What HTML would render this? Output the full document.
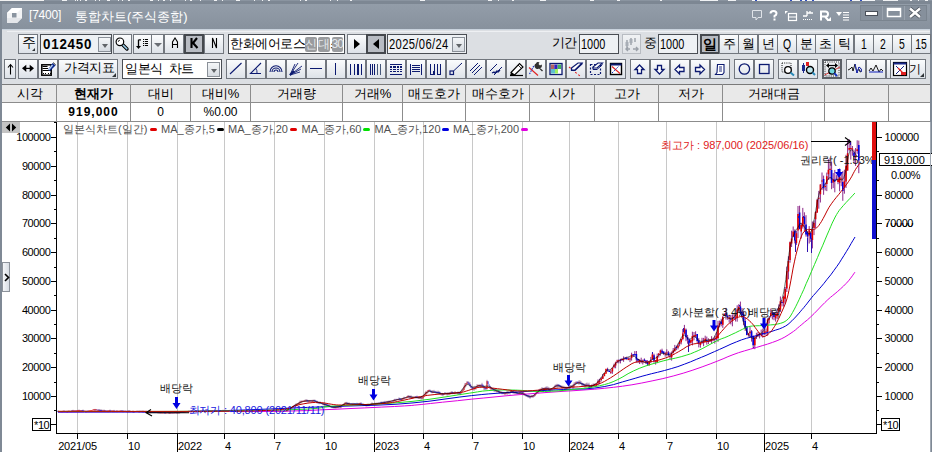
<!DOCTYPE html>
<html><head><meta charset="utf-8"><style>
*{margin:0;padding:0;box-sizing:border-box}
html,body{width:932px;height:452px;overflow:hidden;background:#dcdfe3;font-family:"Liberation Sans",sans-serif;font-size:12px;color:#000}
.a{position:absolute}
.b{position:absolute;border:1px solid #72777e;background:linear-gradient(#fbfcfd,#dde2e8)}
.b.prs{background:#b8bcc3;border:2px solid #44484d}
.b.dis{background:linear-gradient(#f0f2f4,#e0e3e7);border-color:#b8bcc2}
.tx{position:absolute;line-height:16px;white-space:nowrap}
.tx.c{left:0;right:0;text-align:center;top:1px}
.prs .tx.c{top:0}
.ic{position:absolute;left:0;top:0}
.prs .ic{left:-1px;top:-1px}
.tri{position:absolute;right:1px;bottom:1px;width:0;height:0;border-left:4px solid transparent;border-bottom:4px solid #303438}
.ddtri{position:absolute;width:0;height:0;border-left:4px solid transparent;border-right:4px solid transparent;border-top:4px solid #6a6e74}
.inp{position:absolute;top:34px;height:20px;border:1px solid #4a4e54;background:#eef1f4;line-height:18px;padding-left:2px;font-size:13px;white-space:nowrap;overflow:hidden}
.dd{position:absolute;top:2px;width:13px;height:15px;border:1px solid #8a9098;background:linear-gradient(#f4f6f8,#d6dbe1)}
.dd:after{content:"";position:absolute;left:3px;top:6px;border-left:3px solid transparent;border-right:3px solid transparent;border-top:4px solid #606468}
.ttl{color:#fff;font-size:13px;top:9px;white-space:nowrap}
.code{position:absolute;left:2px;top:-1px;font-weight:bold;font-size:15.5px;line-height:19px;letter-spacing:0.9px;transform:scaleX(0.86);transform-origin:0 50%}
.badge{position:absolute;top:37px;height:15px;background:#999b9e;color:#e4e8ec;font-size:12px;line-height:15px;text-align:center;border-radius:2px;overflow:hidden;letter-spacing:-1px}
.tr-r{position:absolute;left:6px;top:4px;border-top:5px solid transparent;border-bottom:5px solid transparent;border-left:6px solid #000}
.tr-l{position:absolute;left:5px;top:3px;border-top:5px solid transparent;border-bottom:5px solid transparent;border-right:6px solid #000}
.cell{position:absolute;text-align:center;font-size:12px;line-height:17px;white-space:nowrap}

.al{font-size:11px;letter-spacing:-0.4px;fill:#000}
.xl{font-size:11px;letter-spacing:-0.15px;fill:#000}
.lg{font-size:11px;fill:#505050}
.an{font-size:11px;fill:#151515}
.lo{font-size:11px;letter-spacing:-0.15px;fill:#2020e0}
.hi{font-size:11px;fill:#e02020}
</style></head><body>
<div class="a" style="left:0px;top:0px;width:932px;height:1px;background:#8a94a0;"></div>
<div class="a" style="left:0px;top:0px;width:44px;height:1px;background:#f2f2f2;"></div>
<div class="a" style="left:0px;top:1px;width:932px;height:3px;background:#7d8793;"></div>
<div class="a" style="left:0px;top:4px;width:932px;height:25px;background:linear-gradient(#939da9,#87919d);"></div>
<div class="a" style="left:2px;top:29px;width:928px;height:56px;background:#dcdfe3;"></div>
<div class="a" style="left:2px;top:29px;width:928px;height:1px;background:#c9d3de;"></div>
<div class="a" style="left:7px;top:31px;width:923px;height:1px;background:#eef0f3;"></div>
<div class="a" style="left:0px;top:4px;width:2px;height:448px;background:#7f8995;"></div>
<div class="a" style="left:930px;top:4px;width:2px;height:448px;background:#7f8995;"></div>
<svg class="a" style="left:0;top:0" width="30" height="30" viewBox="0 0 30 30">
<path d="M12 8H22V18L17 23H7V13Z" fill="#f2f3f5"/>
<path d="M12 8H22L17 13H7Z" fill="#ffffff"/>
<path d="M7 18H17L22 18V18L17 23H7Z" fill="#e4e6ea"/>
<rect x="12" y="13" width="4.5" height="4.5" fill="#8a94a0"/>
</svg>
<div class="a ttl" style="left:29px;font-size:12px;letter-spacing:-0.2px;top:8px">[7400]</div>
<div class="a ttl" style="left:75px;top:8px">통합차트(주식종합)</div>
<div class="a" style="left:62px;top:0px;width:5px;height:1px;background:#f0f2f4;"></div>
<div class="a" style="left:75px;top:0px;width:1px;height:1px;background:#f0f2f4;"></div>
<div class="a" style="left:77px;top:0px;width:1px;height:1px;background:#f0f2f4;"></div>
<div class="a" style="left:80px;top:0px;width:1px;height:1px;background:#f0f2f4;"></div>
<div class="a" style="left:85px;top:0px;width:2px;height:1px;background:#f0f2f4;"></div>
<div class="a" style="left:95px;top:0px;width:1px;height:1px;background:#f0f2f4;"></div>
<div class="a" style="left:99px;top:0px;width:1px;height:1px;background:#f0f2f4;"></div>
<div class="a" style="left:107px;top:0px;width:3px;height:1px;background:#f0f2f4;"></div>
<div class="a" style="left:118px;top:0px;width:1px;height:1px;background:#f0f2f4;"></div>
<div class="a" style="left:122px;top:0px;width:1px;height:1px;background:#f0f2f4;"></div>
<div class="a" style="left:128px;top:0px;width:2px;height:1px;background:#f0f2f4;"></div>
<div class="a" style="left:150px;top:0px;width:3px;height:1px;background:#f0f2f4;"></div>
<div class="a" style="left:158px;top:0px;width:1px;height:1px;background:#f0f2f4;"></div>
<div class="a" style="left:163px;top:0px;width:2px;height:1px;background:#f0f2f4;"></div>
<div class="a" style="left:170px;top:0px;width:1px;height:1px;background:#f0f2f4;"></div>
<div class="a" style="left:185px;top:0px;width:1px;height:1px;background:#f0f2f4;"></div>
<div class="a" style="left:190px;top:0px;width:2px;height:1px;background:#f0f2f4;"></div>
<div class="a" style="left:200px;top:0px;width:1px;height:1px;background:#f0f2f4;"></div>
<div class="a" style="left:214px;top:0px;width:3px;height:1px;background:#f0f2f4;"></div>
<div class="a" style="left:222px;top:0px;width:1px;height:1px;background:#f0f2f4;"></div>
<div class="a" style="left:236px;top:0px;width:4px;height:1px;background:#f0f2f4;"></div>
<div class="a" style="left:254px;top:0px;width:1px;height:1px;background:#f0f2f4;"></div>
<div class="a" style="left:262px;top:0px;width:1px;height:1px;background:#f0f2f4;"></div>
<div class="a" style="left:268px;top:0px;width:2px;height:1px;background:#f0f2f4;"></div>
<div class="a" style="left:300px;top:0px;width:1px;height:1px;background:#f0f2f4;"></div>
<div class="a" style="left:305px;top:0px;width:2px;height:1px;background:#f0f2f4;"></div>
<div class="a" style="left:330px;top:0px;width:1px;height:1px;background:#f0f2f4;"></div>
<div class="a" style="left:337px;top:0px;width:1px;height:1px;background:#f0f2f4;"></div>
<div class="a" style="left:350px;top:0px;width:2px;height:1px;background:#f0f2f4;"></div>
<div class="a" style="left:420px;top:0px;width:5px;height:1px;background:#f0f2f4;"></div>
<div class="a" style="left:488px;top:0px;width:4px;height:1px;background:#f0f2f4;"></div>
<div class="a" style="left:498px;top:0px;width:1px;height:1px;background:#f0f2f4;"></div>
<div class="a" style="left:512px;top:0px;width:2px;height:1px;background:#f0f2f4;"></div>
<div class="a" style="left:540px;top:0px;width:6px;height:1px;background:#f0f2f4;"></div>
<div class="a" style="left:590px;top:0px;width:4px;height:1px;background:#f0f2f4;"></div>
<div class="a" style="left:617px;top:0px;width:3px;height:1px;background:#f0f2f4;"></div>
<div class="a" style="left:660px;top:0px;width:2px;height:1px;background:#f0f2f4;"></div>
<div class="a" style="left:700px;top:0px;width:18px;height:1px;background:#f0f2f4;"></div>
<div class="a" style="left:728px;top:0px;width:8px;height:1px;background:#f0f2f4;"></div>
<div class="a" style="left:883px;top:0px;width:15px;height:1px;background:#f0f2f4;"></div>
<div class="a" style="left:910px;top:0px;width:2px;height:1px;background:#f0f2f4;"></div>
<div class="a" style="left:918px;top:0px;width:1px;height:1px;background:#f0f2f4;"></div>
<div class="a" style="left:925px;top:0px;width:3px;height:1px;background:#f0f2f4;"></div>
<div class="a" style="left:752px;top:0px;width:123px;height:1px;background:#f4f6f8;"></div>
<div class="a" style="left:755px;top:0px;width:2px;height:1px;background:#3050c0;"></div>
<div class="a" style="left:790px;top:0px;width:2px;height:1px;background:#3050c0;"></div>
<div class="a" style="left:800px;top:0px;width:2px;height:1px;background:#3050c0;"></div>
<div class="a" style="left:805px;top:0px;width:2px;height:1px;background:#3050c0;"></div>
<div class="a" style="left:812px;top:0px;width:2px;height:1px;background:#3050c0;"></div>
<div class="a" style="left:850px;top:0px;width:2px;height:1px;background:#3050c0;"></div>
<div class="a" style="left:860px;top:0px;width:2px;height:1px;background:#3050c0;"></div>
<svg class="a" style="left:745px;top:4px" width="187" height="25" viewBox="745 4 187 25">
<path d="M752.5 10.5H761.5V17.5H758L756 20V17.5H752.5Z" fill="none" stroke="#dfe3e8" stroke-width="1"/>
<path d="M770.5 13.5Q770.5 11 773.5 11Q776.5 11 776.5 13.5Q776.5 15 774.5 16V17.5" stroke="#fff" stroke-width="2" fill="none"/><rect x="773.5" y="18.5" width="2" height="2" fill="#fff"/>
<path d="M785 11H788L785 14Z" fill="#fff"/><rect x="788.5" y="13.5" width="8" height="7" fill="none" stroke="#fff" stroke-width="1.2"/><path d="M789 17H796" stroke="#fff"/>
<path d="M803 16H807M807 11V16M807 13H813M810 11V13" stroke="#fff" stroke-width="1.3" fill="none"/><path d="M803 19.5H813" stroke="#fff" stroke-dasharray="1 1"/>
<path d="M821 20.5V11.5H825.5Q828 11.5 828 14Q828 16.5 825.5 16.5H822M825 16.5L828.5 20.5" stroke="#fff" stroke-width="2" fill="none"/><path d="M831 17V21H827Z" fill="#fff"/>
<path d="M836 12H842L839 16Z" fill="#fff"/><path d="M843 12.5H849M843 15H849M843 17.5H849M843 20H849" stroke="#fff" stroke-width="1"/>
<rect x="860.5" y="5.5" width="66" height="15" fill="#86909c" stroke="#7a848f"/>
<path d="M882.5 6V20M904.5 6V20" stroke="#9aa3ae"/>
<rect x="865.5" y="11.5" width="12" height="4" fill="#fff" stroke="#4a505a" stroke-width="1"/>
<rect x="887.5" y="8.5" width="13" height="8" fill="none" stroke="#fff" stroke-width="1.5"/><rect x="887.5" y="8" width="13" height="3" fill="#fff"/>
<path d="M910 8.5L920 17M920 8.5L910 17" stroke="#4a505a" stroke-width="4"/><path d="M910 8.5L920 17M920 8.5L910 17" stroke="#fff" stroke-width="2.4"/>
</svg>
<div class="b " style="left:18px;top:34px;width:20px;height:20px;"><span class="tx" style="left:2.5px;top:0px;font-size:13.5px">주</span><i class="tri" style="border-left-width:3px;border-bottom-width:3px;right:2px;bottom:2px"></i></div>
<div class="inp" style="left:40px;width:72px"><span class="code">012450</span><div class="dd" style="left:57px"></div></div>
<div class="b " style="left:113px;top:34px;width:19px;height:20px;"><svg class="ic" width="17" height="18" viewBox="0 0 17 18"><path d="M8.5 9.5L13 14" stroke="#000" stroke-width="3.4" stroke-linecap="round"/><path d="M9 10L12.8 13.8" stroke="#98cce8" stroke-width="1.6" stroke-linecap="round"/><circle cx="5.9" cy="6.8" r="3.8" fill="#fff" stroke="#000" stroke-width="1.2"/><path d="M4.3 6.8A1.6 1.6 0 0 1 5.9 5.2" stroke="#000" stroke-width="0.9" fill="none"/></svg></div>
<div class="b " style="left:133px;top:34px;width:19px;height:20px;"><svg class="ic" width="17" height="18" viewBox="0 0 17 18"><path d="M4.5 4.8V11.5M4.5 4.8H7" stroke="#000" stroke-width="1.3" fill="none"/><path d="M2 11L7 11L4.5 14Z" fill="#000"/><path d="M9 4.5H10M9 6.5H10M9 8.5H10M9 10.5H10" stroke="#000" stroke-width="1"/><path d="M10.8 4.5H14M10.8 6.5H14M10.8 8.5H14M10.8 10.5H14" stroke="#000" stroke-width="1"/></svg></div>
<div class="b " style="left:151px;top:34px;width:13px;height:20px;"><i class="ddtri" style="left:2px;top:8px"></i></div>
<div class="b " style="left:164px;top:34px;width:20px;height:20px;"></div>
<div class="b prs" style="left:184px;top:34px;width:20px;height:20px;"></div>
<div class="b " style="left:204px;top:34px;width:20px;height:20px;"></div>
<svg class="a" style="left:160px;top:34px" width="64" height="20" viewBox="160 34 64 20"><path d="M172.5 48V42L175 38L177.5 42V48M172.5 44.5H177.5" stroke="#000" stroke-width="1.1" fill="none"/><path d="M191.5 38V48M197 38L193 43L197.5 48" stroke="#000" stroke-width="2.1" fill="none"/><path d="M212.5 48V38L216.5 48V38" stroke="#000" stroke-width="1.1" fill="none"/></svg>
<div class="inp" style="left:228px;width:117px;background:#fff;font-size:13px;padding-left:1px;letter-spacing:-0.5px;line-height:18px">한화에어로스페이스</div>
<div class="badge" style="left:305px;width:11.5px">신</div>
<div class="badge" style="left:318px;width:11.5px">대</div>
<div class="badge" style="left:331.5px;width:11.5px">30</div>
<div class="b " style="left:347px;top:34px;width:20px;height:20px;"><i class="tr-r"></i></div>
<div class="b prs" style="left:366px;top:34px;width:20px;height:20px;"><i class="tr-l"></i></div>
<div class="inp" style="left:387px;width:80px;font-size:14px;padding-left:1px"><span style="display:inline-block;transform:scaleX(0.8);transform-origin:0 50%;letter-spacing:0.45px">2025/06/24</span><div class="dd" style="left:64px"></div></div>
<span class="tx" style="left:552px;top:35px;font-size:13px;letter-spacing:-1px">기간</span>
<div class="inp" style="left:579px;width:40px;font-size:14px;padding-left:1px"><span style="display:inline-block;transform:scaleX(0.78);transform-origin:0 50%">1000</span></div>
<div class="b dis" style="left:622px;top:34px;width:19px;height:20px;"><svg class="ic" width="17" height="18" viewBox="0 0 17 18"><path d="M4 5V13M8 3V10M12 3V7M3 14L7 14M10 14H15M5 12L3 14L5 16M13 12L15 14L13 16" stroke="#9aa0a8" stroke-width="1.4" fill="none"/><rect x="2.5" y="7" width="3" height="4" fill="#a8aeb6"/><rect x="6.5" y="4" width="3" height="4" fill="#a8aeb6"/></svg></div>
<span class="tx" style="left:644px;top:35px;font-size:12.5px">중</span>
<div class="inp" style="left:658px;width:40px;font-size:14px;padding-left:1px"><span style="display:inline-block;transform:scaleX(0.78);transform-origin:0 50%">1000</span></div>
<div class="b prs" style="left:700px;top:34px;width:20px;height:20px;"><span class="tx c" style="font-weight:bold;font-size:14px;">일</span></div>
<div class="b " style="left:719px;top:34px;width:20px;height:20px;"><span class="tx c" style="font-size:13px;">주</span></div>
<div class="b " style="left:738px;top:34px;width:20px;height:20px;"><span class="tx c" style="font-size:13px;">월</span></div>
<div class="b " style="left:758px;top:34px;width:20px;height:20px;"><span class="tx c" style="font-size:13px;">년</span></div>
<div class="b " style="left:777px;top:34px;width:20px;height:20px;"><span class="tx c" style="font-size:14.5px;transform:scaleX(0.72);line-height:17px;">Q</span></div>
<div class="b " style="left:796px;top:34px;width:20px;height:20px;"><span class="tx c" style="font-size:13px;">분</span></div>
<div class="b " style="left:815px;top:34px;width:20px;height:20px;"><span class="tx c" style="font-size:13px;">초</span></div>
<div class="b " style="left:834px;top:34px;width:20px;height:20px;"><span class="tx c" style="font-size:13px;">틱</span></div>
<div class="b " style="left:854px;top:34px;width:20px;height:20px;"><span class="tx c" style="font-size:14.5px;transform:scaleX(0.72);line-height:17px;">1</span></div>
<div class="b " style="left:873px;top:34px;width:20px;height:20px;"><span class="tx c" style="font-size:14.5px;transform:scaleX(0.72);line-height:17px;">2</span></div>
<div class="b " style="left:892px;top:34px;width:20px;height:20px;"><span class="tx c" style="font-size:14.5px;transform:scaleX(0.72);line-height:17px;">5</span></div>
<div class="b " style="left:911px;top:34px;width:20px;height:20px;"><span class="tx c" style="font-size:14.5px;transform:scaleX(0.72);line-height:17px;">15</span></div>
<div class="b " style="left:4px;top:59px;width:12px;height:20px;"><svg class="ic" width="10" height="18" viewBox="0 0 10 18"><path d="M5.5 4.5V14.5M3 7.5L5.5 4.5L8 7.5" stroke="#000" stroke-width="1.1" fill="none"/></svg></div>
<div class="b " style="left:18px;top:59px;width:20px;height:20px;"><svg class="ic" width="18" height="18" viewBox="0 0 18 18"><path d="M3 8.3L7.3 4.7V11.9ZM15 8.3L10.7 4.7V11.9Z" fill="#000"/><rect x="7" y="7.8" width="4" height="1.2" fill="#000"/></svg></div>
<div class="b " style="left:38px;top:59px;width:20px;height:20px;"><svg class="ic" width="18" height="18" viewBox="0 0 18 18"><rect x="2.8" y="4.8" width="9.4" height="10.4" fill="#fff" stroke="#000" stroke-width="1.5"/><path d="M3.5 6.5H8.5M3.5 8.5H9M3.5 10.5H12" stroke="#000" stroke-width="1"/><path d="M4 13.5H5M6 13.5H7M9 13.5H10M11 13.5H12" stroke="#000" stroke-width="1.2"/><path d="M9 9.5L13.5 3L16.5 5.5L11 11Z" fill="#0c2a90"/><path d="M9 9.5L13 4.5L14 5.5L10 10.5Z" fill="#b8d0f0"/><path d="M14 2.5L16.8 5" stroke="#000" stroke-width="0.8"/></svg></div>
<div class="b " style="left:58px;top:59px;width:60px;height:20px;"><span class="tx" style="left:5px;top:0px;font-size:13px;letter-spacing:-0.3px">가격지표</span><i class="tri"></i></div>
<div class="inp" style="left:122px;top:59px;width:100px;background:#fff;font-size:13px;padding-left:2px;letter-spacing:-0.5px;line-height:17px">일본식&nbsp; 차트<div class="dd" style="left:84px"></div></div>
<div class="b " style="left:226px;top:59px;width:20px;height:20px;"><svg class="ic" width="18" height="18" viewBox="0 0 18 18"><path d="M3 14L14.5 3" stroke="#0c1a70" stroke-width="1.1"/></svg></div>
<div class="b " style="left:246px;top:59px;width:20px;height:20px;"><svg class="ic" width="18" height="18" viewBox="0 0 18 18"><path d="M14 3L3.5 13.5H14" stroke="#0c1a70" stroke-width="1.1" fill="none"/><path d="M8.5 8Q10.5 10.5 10 13.5" stroke="#0c1a70" fill="none" stroke-width="0.9"/></svg></div>
<div class="b " style="left:266px;top:59px;width:20px;height:20px;"><svg class="ic" width="18" height="18" viewBox="0 0 18 18"><path d="M3 12A6 6.2 0 0 1 15 12M5 12A4 4 0 0 1 13 12M7 12A2 2 0 0 1 11 12" stroke="#0c1a70" stroke-width="1.1" fill="none"/></svg></div>
<div class="b " style="left:286px;top:59px;width:20px;height:20px;"><svg class="ic" width="18" height="18" viewBox="0 0 18 18"><path d="M3 15L15 6M3 15L14 9M3 15L13 12M3 15L11 3M3 15L8 4" stroke="#0c1a70" stroke-width="0.9"/><path d="M3 15L7 11" stroke="#0c1a70" stroke-width="2"/></svg></div>
<div class="b " style="left:306px;top:59px;width:20px;height:20px;"><svg class="ic" width="18" height="18" viewBox="0 0 18 18"><path d="M3 8.5H15" stroke="#0c1a70" stroke-width="1.2" shape-rendering="crispEdges"/></svg></div>
<div class="b " style="left:326px;top:59px;width:20px;height:20px;"><svg class="ic" width="18" height="18" viewBox="0 0 18 18"><path d="M8.5 3V15" stroke="#0c1a70" stroke-width="1.2" shape-rendering="crispEdges"/></svg></div>
<div class="b " style="left:346px;top:59px;width:20px;height:20px;"><svg class="ic" width="18" height="18" viewBox="0 0 18 18"><path d="M3.5 4V15M7.5 4V15M11 4V15M14.5 4V15" stroke="#0c1a70" stroke-width="1.2" shape-rendering="crispEdges"/></svg></div>
<div class="b " style="left:366px;top:59px;width:20px;height:20px;"><svg class="ic" width="18" height="18" viewBox="0 0 18 18"><path d="M3.5 4V15M5.5 4V15M7.5 4V15" stroke="#0c1a70" stroke-width="1.1" shape-rendering="crispEdges"/><path d="M10.5 4V15M13.5 4V15" stroke="#46587a" stroke-width="1.1" shape-rendering="crispEdges"/></svg></div>
<div class="b " style="left:386px;top:59px;width:20px;height:20px;"><svg class="ic" width="18" height="18" viewBox="0 0 18 18"><g stroke="#0c1a70" stroke-width="1.1" shape-rendering="crispEdges"><path d="M3 4.5H15M3 14.5H15"/><path d="M3 7H4.5M5.5 7H8.5M9.5 7H11.5M12.5 7H15M3 9.5H4.5M5.5 9.5H8.5M9.5 9.5H11.5M12.5 9.5H15M3 11.5H4.5M5.5 11.5H8.5M9.5 11.5H11.5M12.5 11.5H15"/></g></svg></div>
<div class="b " style="left:406px;top:59px;width:20px;height:20px;"><svg class="ic" width="18" height="18" viewBox="0 0 18 18"><g stroke="#0c1a70" stroke-width="1.1" shape-rendering="crispEdges"><path d="M3.5 3.5V14.5M14.5 3.5V14.5M5 5.5H13M5 7.5H13M5 9.5H13M5 11.5H13"/></g></svg></div>
<div class="b " style="left:426px;top:59px;width:20px;height:20px;"><svg class="ic" width="18" height="18" viewBox="0 0 18 18"><path d="M3.5 4V14.5H6.5V11M7.5 14.5V4M10.5 4V14.5H13.5V4" stroke="#0c1a70" stroke-width="1.1" fill="none" shape-rendering="crispEdges"/></svg></div>
<div class="b " style="left:446px;top:59px;width:20px;height:20px;"><svg class="ic" width="18" height="18" viewBox="0 0 18 18"><path d="M6.5 11L15 3" stroke="#0c1a70" stroke-width="1"/><rect x="3" y="11" width="3.5" height="3.5" fill="none" stroke="#0c1a70" stroke-width="1.2"/></svg></div>
<div class="b " style="left:466px;top:59px;width:20px;height:20px;"><svg class="ic" width="18" height="18" viewBox="0 0 18 18"><path d="M3 11L11 3M5 13L13 5M7 15L15 7" stroke="#0c1a70" stroke-width="1"/></svg></div>
<div class="b " style="left:486px;top:59px;width:20px;height:20px;"><svg class="ic" width="18" height="18" viewBox="0 0 18 18"><path d="M3 11L10 4M7 15L15 7" stroke="#0c1a70" stroke-width="1"/><path d="M5 13L7 12L8 13L10 11L11 12L13 10" stroke="#0c1a70" stroke-width="1.3" fill="none"/></svg></div>
<div class="b " style="left:506px;top:59px;width:20px;height:20px;"><svg class="ic" width="18" height="18" viewBox="0 0 18 18"><path d="M4 12.5L12.5 3.5L16 7L7.5 15Z" fill="#fff" stroke="#000" stroke-width="1.1"/><path d="M3 15.5L4 12.5L7.5 15Z" fill="#000"/><path d="M3 15.5H16" stroke="#000" stroke-width="1.2"/><path d="M11 5L14.5 8.5" stroke="#000" stroke-width="0.8"/></svg></div>
<div class="b " style="left:526px;top:59px;width:20px;height:20px;"><svg class="ic" width="18" height="18" viewBox="0 0 18 18"><path d="M2 7.5L11 15.5" stroke="#e02020" stroke-width="1.1"/><path d="M2.5 14L7 5.5" stroke="#1030c0" stroke-width="1.1" stroke-dasharray="1.5 1"/><path d="M9 3.5A2.2 2.2 0 0 1 12.5 2.5L11.5 4L13 5.5L14.5 4.5A2.2 2.2 0 0 1 13 8L16 10.5L15 11.5L12 8.5A2.2 2.2 0 0 1 9 3.5Z" fill="#303030"/></svg></div>
<div class="b " style="left:546px;top:59px;width:20px;height:20px;"><svg class="ic" width="18" height="18" viewBox="0 0 18 18"><rect x="3" y="3.5" width="12" height="11" fill="#fff" stroke="#0c1a70" stroke-width="1.3"/><rect x="4" y="4.5" width="3.3" height="4.5" fill="#b06060"/><rect x="7.3" y="4.5" width="3.3" height="4.5" fill="#3020c0"/><rect x="10.6" y="4.5" width="3.4" height="4.5" fill="#40b060"/><rect x="4" y="9" width="4" height="4.5" fill="#60c0d0"/><rect x="8" y="9" width="3" height="4.5" fill="#a0f060"/></svg></div>
<div class="b " style="left:566px;top:59px;width:20px;height:20px;"><svg class="ic" width="18" height="18" viewBox="0 0 18 18"><path d="M2 7L13 16" stroke="#e02020" stroke-width="1.1" stroke-dasharray="2 2"/><path d="M4.5 8L11 3H15L8 10H4.5Z" fill="#fff" stroke="#0c1a70" stroke-width="1.2"/><path d="M4.5 8V10.5H8L15 4V3" fill="none" stroke="#0c1a70" stroke-width="1.1"/></svg></div>
<div class="b " style="left:586px;top:59px;width:20px;height:20px;"><svg class="ic" width="18" height="18" viewBox="0 0 18 18"><rect x="3.5" y="4.5" width="10" height="10" fill="none" stroke="#0c1a70" stroke-width="1.2" stroke-dasharray="2 1.5"/><path d="M6 7L11 3H15.5L10 8H6Z" fill="#fff" stroke="#0c1a70" stroke-width="1.1"/><path d="M6 7V9.5H10L15.5 4.5" fill="none" stroke="#0c1a70" stroke-width="1"/></svg></div>
<div class="b " style="left:606px;top:59px;width:20px;height:20px;"><svg class="ic" width="18" height="18" viewBox="0 0 18 18"><rect x="3.5" y="3.5" width="11" height="11" fill="#fff" stroke="#000" stroke-width="1.4"/><rect x="3.5" y="3.5" width="11" height="2" fill="#0c1a70"/><path d="M5 6.5L13 13.5" stroke="#e02020" stroke-width="1.1"/><path d="M5 13L12 6" stroke="#1030c0" stroke-width="1" stroke-dasharray="1.5 1"/></svg></div>
<div class="b " style="left:630px;top:59px;width:20px;height:20px;"><svg class="ic" width="18" height="18" viewBox="0 0 18 18"><path d="M8.5 5L4 9.5H6.5V13.5H10.5V9.5H13Z" fill="#fff" stroke="#0c1a70" stroke-width="1.3" stroke-linejoin="miter"/></svg></div>
<div class="b " style="left:650px;top:59px;width:20px;height:20px;"><svg class="ic" width="18" height="18" viewBox="0 0 18 18"><path d="M8.5 14L4 9.5H6.5V5.5H10.5V9.5H13Z" fill="#fff" stroke="#0c1a70" stroke-width="1.3"/></svg></div>
<div class="b " style="left:670px;top:59px;width:20px;height:20px;"><svg class="ic" width="18" height="18" viewBox="0 0 18 18"><path d="M4 9.5L8.5 5V7.5H13V11.5H8.5V14Z" fill="#fff" stroke="#0c1a70" stroke-width="1.3"/></svg></div>
<div class="b " style="left:690px;top:59px;width:20px;height:20px;"><svg class="ic" width="18" height="18" viewBox="0 0 18 18"><path d="M13.5 9.5L9 5V7.5H4.5V11.5H9V14Z" fill="#fff" stroke="#0c1a70" stroke-width="1.3"/></svg></div>
<div class="b " style="left:710px;top:59px;width:20px;height:20px;"><svg class="ic" width="18" height="18" viewBox="0 0 18 18"><path d="M6.5 4.5H13V12.5L11.5 14.5H4.5L6 12.5Z" fill="#fff" stroke="#0c1a70" stroke-width="1.1"/><path d="M8 7H11M8 9H11M8 11H11" stroke="#0c1a70" stroke-width="0.9"/></svg></div>
<div class="b " style="left:734px;top:59px;width:20px;height:20px;"><svg class="ic" width="18" height="18" viewBox="0 0 18 18"><circle cx="9.4" cy="9" r="5.2" fill="none" stroke="#0c1a70" stroke-width="1.3"/></svg></div>
<div class="b " style="left:754px;top:59px;width:20px;height:20px;"><svg class="ic" width="18" height="18" viewBox="0 0 18 18"><rect x="4.5" y="4.5" width="9.5" height="9" fill="none" stroke="#0c1a70" stroke-width="1.3"/></svg></div>
<div class="b " style="left:778px;top:59px;width:20px;height:20px;"><svg class="ic" width="18" height="18" viewBox="0 0 18 18"><rect x="3" y="3" width="9" height="9" fill="none" stroke="#000" stroke-width="0.9" stroke-dasharray="1 1.2"/><circle cx="9" cy="10" r="3.3" fill="#fff" stroke="#000" stroke-width="1.3"/><path d="M11.5 12.5L15 15.5" stroke="#2a8ab8" stroke-width="2"/></svg></div>
<div class="b " style="left:798px;top:59px;width:20px;height:20px;"><svg class="ic" width="18" height="18" viewBox="0 0 18 18"><rect x="3" y="5" width="3" height="6" fill="#1c2a8c"/><path d="M4.5 3V13" stroke="#1c2a8c"/><rect x="7" y="2" width="3" height="4" fill="#e02020"/><circle cx="11" cy="10" r="3.5" fill="#bfe8f0" stroke="#000" stroke-width="1.4"/><path d="M13.5 12.5L16 15" stroke="#2a8ab8" stroke-width="2"/></svg></div>
<div class="b " style="left:822px;top:59px;width:20px;height:20px;border:2px solid #5c6066;background:linear-gradient(#f2f4f7,#dfe3e9)"><svg class="ic" style="left:-1px;top:-1px" width="18" height="18" viewBox="0 0 18 18"><rect x="2" y="2" width="14" height="14" fill="none" stroke="#222" stroke-width="0.9" stroke-dasharray="1 1.2"/><path d="M4.5 5.5H13.5" stroke="#000" stroke-width="1.2"/><path d="M3 5.5L6 3V8ZM15 5.5L12 3V8Z" fill="#000"/><path d="M1.5 15L17 7" stroke="#d02020" stroke-width="0.9"/><circle cx="9" cy="11" r="3.2" fill="#70d8e0" stroke="#000" stroke-width="1.3"/><path d="M11.2 13.2L14 16" stroke="#1030c0" stroke-width="1.8"/></svg></div>
<div class="b " style="left:846px;top:59px;width:20px;height:20px;"><svg class="ic" width="18" height="18" viewBox="0 0 18 18"><path d="M1 10L3 9L5 7L6 11L8 4L10 13L12 7Q16 9 14 12Q12 12 12 9" stroke="#000" stroke-width="0.9" fill="none"/><path d="M8 4L10 13L12 7Q16 9 14 12" stroke="#2030c0" stroke-width="1" fill="none"/></svg></div>
<div class="b " style="left:866px;top:59px;width:20px;height:20px;"><svg class="ic" width="18" height="18" viewBox="0 0 18 18"><path d="M2 11L4 8L6 11L9 5L12 12L14 9L16 11" stroke="#000" stroke-width="0.9" fill="none"/><path d="M2 12H16" stroke="#2030c0" stroke-width="1.1"/></svg></div>
<div class="b " style="left:886px;top:59px;width:5px;height:20px;"></div>
<div class="b " style="left:890px;top:59px;width:20px;height:20px;"><svg class="ic" width="18" height="18" viewBox="0 0 18 18"><rect x="2.5" y="2.5" width="13" height="13" fill="#fff" stroke="#000" stroke-width="1.2"/><rect x="2.5" y="2.5" width="13" height="2" fill="#1c2a8c"/><path d="M5 14L13 6M5 6L13 14" stroke="#1c2a8c"/><path d="M7 8L14 15" stroke="#e02020" stroke-width="1.3"/><rect x="10" y="12" width="5" height="3" fill="#e02020"/></svg></div>
<div class="b " style="left:909px;top:59px;width:17px;height:20px;"><span class="tx" style="left:-1px;top:1px;font-size:12px">기</span><i class="tri"></i></div>
<div class="a" style="left:2px;top:84px;width:928px;height:38px;background:#fff;"></div>
<div class="a" style="left:2px;top:85px;width:928px;height:17px;background:#e9e9e9;"></div>
<div class="a" style="left:2px;top:84px;width:928px;height:1px;background:#7a7a7a;"></div>
<div class="a" style="left:2px;top:102px;width:928px;height:1px;background:#8c8c8c;"></div>
<div class="a" style="left:2px;top:121px;width:928px;height:1px;background:#8c8c8c;"></div>
<div class="a" style="left:56px;top:84px;width:1px;height:38px;background:#8c8c8c;"></div>
<div class="a" style="left:130px;top:84px;width:1px;height:38px;background:#8c8c8c;"></div>
<div class="a" style="left:190px;top:84px;width:1px;height:38px;background:#8c8c8c;"></div>
<div class="a" style="left:250px;top:84px;width:1px;height:38px;background:#8c8c8c;"></div>
<div class="a" style="left:342px;top:84px;width:1px;height:38px;background:#8c8c8c;"></div>
<div class="a" style="left:402px;top:84px;width:1px;height:38px;background:#8c8c8c;"></div>
<div class="a" style="left:465px;top:84px;width:1px;height:38px;background:#8c8c8c;"></div>
<div class="a" style="left:529px;top:84px;width:1px;height:38px;background:#8c8c8c;"></div>
<div class="a" style="left:594px;top:84px;width:1px;height:38px;background:#8c8c8c;"></div>
<div class="a" style="left:658px;top:84px;width:1px;height:38px;background:#8c8c8c;"></div>
<div class="a" style="left:722px;top:84px;width:1px;height:38px;background:#8c8c8c;"></div>
<div class="a" style="left:824px;top:84px;width:1px;height:38px;background:#8c8c8c;"></div>
<div class="a" style="left:888px;top:84px;width:1px;height:38px;background:#8c8c8c;"></div>
<div class="cell" style="left:3px;top:85px;width:53px;font-size:13px;">시각</div>
<div class="cell" style="left:3px;top:103.5px;width:53px;"></div>
<div class="cell" style="left:57px;top:85px;width:73px;font-size:13px;font-weight:bold;">현재가</div>
<div class="cell" style="left:57px;top:103.5px;width:73px;font-weight:bold;"><span style="letter-spacing:1px">919,000</span></div>
<div class="cell" style="left:131px;top:85px;width:59px;font-size:13px;">대비</div>
<div class="cell" style="left:131px;top:103.5px;width:59px;">0</div>
<div class="cell" style="left:191px;top:85px;width:59px;font-size:13px;">대비%</div>
<div class="cell" style="left:191px;top:103.5px;width:59px;">%0.00</div>
<div class="cell" style="left:251px;top:85px;width:91px;font-size:13px;">거래량</div>
<div class="cell" style="left:251px;top:103.5px;width:91px;"></div>
<div class="cell" style="left:343px;top:85px;width:59px;font-size:13px;">거래%</div>
<div class="cell" style="left:343px;top:103.5px;width:59px;"></div>
<div class="cell" style="left:403px;top:85px;width:62px;font-size:13px;">매도호가</div>
<div class="cell" style="left:403px;top:103.5px;width:62px;"></div>
<div class="cell" style="left:466px;top:85px;width:63px;font-size:13px;">매수호가</div>
<div class="cell" style="left:466px;top:103.5px;width:63px;"></div>
<div class="cell" style="left:530px;top:85px;width:64px;font-size:13px;">시가</div>
<div class="cell" style="left:530px;top:103.5px;width:64px;"></div>
<div class="cell" style="left:595px;top:85px;width:63px;font-size:13px;">고가</div>
<div class="cell" style="left:595px;top:103.5px;width:63px;"></div>
<div class="cell" style="left:659px;top:85px;width:63px;font-size:13px;">저가</div>
<div class="cell" style="left:659px;top:103.5px;width:63px;"></div>
<div class="cell" style="left:723px;top:85px;width:101px;font-size:13px;">거래대금</div>
<div class="cell" style="left:723px;top:103.5px;width:101px;"></div>
<div class="cell" style="left:825px;top:85px;width:63px;font-size:13px;"></div>
<div class="cell" style="left:825px;top:103.5px;width:63px;"></div>
<div class="cell" style="left:889px;top:85px;width:41px;font-size:13px;"></div>
<div class="cell" style="left:889px;top:103.5px;width:41px;"></div>
<svg class="a" style="left:0;top:0" width="932" height="452" viewBox="0 0 932 452"><rect x="2" y="122" width="928" height="330" fill="#fff"/><rect x="77" y="122" width="1" height="311" fill="#c8c8c8"/><rect x="127" y="122" width="1" height="311" fill="#c8c8c8"/><rect x="177" y="122" width="1" height="311" fill="#c8c8c8"/><rect x="224" y="122" width="1" height="311" fill="#c8c8c8"/><rect x="274" y="122" width="1" height="311" fill="#c8c8c8"/><rect x="324" y="122" width="1" height="311" fill="#c8c8c8"/><rect x="374" y="122" width="1" height="311" fill="#c8c8c8"/><rect x="423" y="122" width="1" height="311" fill="#c8c8c8"/><rect x="472" y="122" width="1" height="311" fill="#c8c8c8"/><rect x="522" y="122" width="1" height="311" fill="#c8c8c8"/><rect x="569" y="122" width="1" height="311" fill="#c8c8c8"/><rect x="618" y="122" width="1" height="311" fill="#c8c8c8"/><rect x="666" y="122" width="1" height="311" fill="#c8c8c8"/><rect x="716" y="122" width="1" height="311" fill="#c8c8c8"/><rect x="764" y="122" width="1" height="311" fill="#c8c8c8"/><rect x="811" y="122" width="1" height="311" fill="#c8c8c8"/><rect x="2" y="122" width="18" height="11" fill="#c4c4c4"/><path d="M5.8 127.5L10 123.6V131.4Z M16.2 127.5L12 123.6V131.4Z" fill="#000"/><rect x="56" y="122" width="1" height="312" fill="#000"/><rect x="56" y="433" width="821" height="1" fill="#000"/><rect x="876" y="122" width="1" height="312" fill="#000"/><rect x="54" y="122" width="2" height="1" fill="#000"/><rect x="51" y="396" width="5" height="1" fill="#000"/><rect x="877" y="396" width="5" height="1" fill="#000"/><text x="50.5" y="400" text-anchor="end" class="al">10000</text><text x="884.5" y="400" class="al">10000</text><rect x="51" y="367" width="5" height="1" fill="#000"/><rect x="877" y="367" width="5" height="1" fill="#000"/><text x="50.5" y="371" text-anchor="end" class="al">20000</text><text x="884.5" y="371" class="al">20000</text><rect x="51" y="338" width="5" height="1" fill="#000"/><rect x="877" y="338" width="5" height="1" fill="#000"/><text x="50.5" y="342" text-anchor="end" class="al">30000</text><text x="884.5" y="342" class="al">30000</text><rect x="51" y="310" width="5" height="1" fill="#000"/><rect x="877" y="310" width="5" height="1" fill="#000"/><text x="50.5" y="314" text-anchor="end" class="al">40000</text><text x="884.5" y="314" class="al">40000</text><rect x="51" y="281" width="5" height="1" fill="#000"/><rect x="877" y="281" width="5" height="1" fill="#000"/><text x="50.5" y="285" text-anchor="end" class="al">50000</text><text x="884.5" y="285" class="al">50000</text><rect x="51" y="252" width="5" height="1" fill="#000"/><rect x="877" y="252" width="5" height="1" fill="#000"/><text x="50.5" y="256" text-anchor="end" class="al">60000</text><text x="884.5" y="256" class="al">60000</text><rect x="51" y="223" width="5" height="1" fill="#000"/><rect x="877" y="223" width="5" height="1" fill="#000"/><text x="50.5" y="227" text-anchor="end" class="al">70000</text><text x="884.5" y="227" class="al">70000</text><rect x="51" y="195" width="5" height="1" fill="#000"/><rect x="877" y="195" width="5" height="1" fill="#000"/><text x="50.5" y="199" text-anchor="end" class="al">80000</text><text x="884.5" y="199" class="al">80000</text><rect x="51" y="166" width="5" height="1" fill="#000"/><rect x="877" y="166" width="5" height="1" fill="#000"/><text x="50.5" y="170" text-anchor="end" class="al">90000</text><rect x="51" y="137" width="5" height="1" fill="#000"/><rect x="877" y="137" width="5" height="1" fill="#000"/><text x="50.5" y="141" text-anchor="end" class="al">100000</text><text x="884.5" y="141" class="al">100000</text><rect x="54" y="410" width="2" height="1" fill="#000"/><rect x="877" y="410" width="2" height="1" fill="#000"/><rect x="54" y="382" width="2" height="1" fill="#000"/><rect x="877" y="382" width="2" height="1" fill="#000"/><rect x="54" y="353" width="2" height="1" fill="#000"/><rect x="877" y="353" width="2" height="1" fill="#000"/><rect x="54" y="324" width="2" height="1" fill="#000"/><rect x="877" y="324" width="2" height="1" fill="#000"/><rect x="54" y="295" width="2" height="1" fill="#000"/><rect x="877" y="295" width="2" height="1" fill="#000"/><rect x="54" y="267" width="2" height="1" fill="#000"/><rect x="877" y="267" width="2" height="1" fill="#000"/><rect x="54" y="238" width="2" height="1" fill="#000"/><rect x="877" y="238" width="2" height="1" fill="#000"/><rect x="54" y="209" width="2" height="1" fill="#000"/><rect x="877" y="209" width="2" height="1" fill="#000"/><rect x="54" y="180" width="2" height="1" fill="#000"/><rect x="877" y="180" width="2" height="1" fill="#000"/><rect x="54" y="151" width="2" height="1" fill="#000"/><rect x="877" y="151" width="2" height="1" fill="#000"/><rect x="50" y="424" width="6" height="1" fill="#000"/><rect x="877" y="424" width="5" height="1" fill="#000"/><rect x="32.5" y="418.5" width="18" height="12" fill="#fff" stroke="#000"/><text x="34" y="428.5" class="al">*10</text><rect x="881.5" y="418.5" width="18" height="12" fill="#fff" stroke="#000"/><text x="883" y="428.5" class="al">*10</text><rect x="77" y="434" width="1" height="5" fill="#000"/><text x="77.5" y="450" text-anchor="middle" class="xl">2021/05</text><rect x="127" y="434" width="1" height="5" fill="#000"/><text x="128" y="450" class="xl">10</text><rect x="177" y="434" width="1" height="18" fill="#000"/><text x="178" y="450" class="xl">2022</text><rect x="224" y="434" width="1" height="5" fill="#000"/><text x="225" y="450" class="xl">4</text><rect x="274" y="434" width="1" height="5" fill="#000"/><text x="275" y="450" class="xl">7</text><rect x="324" y="434" width="1" height="5" fill="#000"/><text x="325" y="450" class="xl">10</text><rect x="374" y="434" width="1" height="18" fill="#000"/><text x="375" y="450" class="xl">2023</text><rect x="423" y="434" width="1" height="5" fill="#000"/><text x="424" y="450" class="xl">4</text><rect x="472" y="434" width="1" height="5" fill="#000"/><text x="473" y="450" class="xl">7</text><rect x="522" y="434" width="1" height="5" fill="#000"/><text x="523" y="450" class="xl">10</text><rect x="569" y="434" width="1" height="18" fill="#000"/><text x="570" y="450" class="xl">2024</text><rect x="618" y="434" width="1" height="5" fill="#000"/><text x="619" y="450" class="xl">4</text><rect x="666" y="434" width="1" height="5" fill="#000"/><text x="667" y="450" class="xl">7</text><rect x="716" y="434" width="1" height="5" fill="#000"/><text x="717" y="450" class="xl">10</text><rect x="764" y="434" width="1" height="18" fill="#000"/><text x="765" y="450" class="xl">2025</text><rect x="811" y="434" width="1" height="5" fill="#000"/><text x="812" y="450" class="xl">4</text><text x="63" y="133" class="lg">일본식차트(일간)</text><text x="161" y="133" class="lg">MA_종가,5</text><text x="228" y="133" class="lg">MA_종가,20</text><text x="301.5" y="133" class="lg">MA_종가,60</text><text x="374.5" y="133" class="lg">MA_종가,120</text><text x="453" y="133" class="lg">MA_종가,200</text><rect x="150" y="128" width="7" height="3" rx="1.5" fill="#e00000"/><rect x="217" y="128" width="7" height="3" rx="1.5" fill="#000"/><rect x="290" y="128" width="7" height="3" rx="1.5" fill="#e00000"/><rect x="363" y="128" width="7" height="3" rx="1.5" fill="#00e000"/><rect x="442" y="128" width="7" height="3" rx="1.5" fill="#0000e0"/><rect x="521" y="128" width="7" height="3" rx="1.5" fill="#e000e0"/><path d="M590.0 385.4V387.6M591.6 384.6V387.7M593.2 383.6V386.8M594.8 383.6V386.6M596.4 383.2V386.1M598.0 379.4V385.4M599.6 378.7V384.2M601.2 377.2V381.4M602.8 374.0V379.0M607.6 367.7V371.7M610.8 369.5V373.8M612.4 367.8V373.8M614.0 363.7V368.3M615.6 361.7V368.3M617.2 359.7V363.2M618.8 359.5V363.3M620.4 358.8V363.4M622.0 358.0V361.0M623.6 356.4V361.8M625.2 357.0V359.6M626.8 356.6V360.1M628.4 357.4V360.2M630.0 357.2V362.1M631.6 352.7V360.6M633.2 354.2V357.0M634.8 351.1V355.7M636.4 351.0V362.5M638.0 358.6V363.1M639.6 359.4V364.0M641.2 357.7V363.3M642.8 359.6V364.5M644.4 358.4V361.1M646.0 360.2V364.0M647.6 360.2V365.9M649.2 361.2V365.5M650.8 356.9V363.1M652.4 352.6V360.0M654.0 353.7V362.7M655.6 360.0V364.6M657.2 353.6V363.2M658.8 353.0V357.6M660.4 349.6V355.7M662.0 348.7V353.5M663.6 351.5V354.8M665.2 351.8V356.7M666.8 349.3V355.6M668.4 350.9V356.1M670.0 352.4V359.5M671.6 351.5V360.6M673.2 348.0V353.6M674.8 344.9V351.9M676.4 345.7V350.2M678.0 343.5V349.4M679.6 340.7V346.4M681.2 338.7V344.4M682.8 329.0V340.3M684.4 324.9V334.3M686.0 328.6V341.2M687.6 334.9V343.7M689.2 338.5V346.2M690.8 339.4V343.6M692.4 331.7V345.4M694.0 332.0V340.3M695.6 331.3V337.5M697.2 334.0V343.2M698.8 338.1V347.4M700.4 342.3V347.7M702.0 337.8V344.1M703.6 337.9V346.2M705.2 335.7V342.0M706.8 336.6V344.7M708.4 338.3V344.0M710.0 339.3V342.0M711.6 336.2V343.6M713.2 337.8V341.3M714.8 335.7V343.7M716.4 332.3V340.4M718.0 320.8V341.8M719.6 320.6V327.4M721.2 318.8V326.3M722.8 315.9V327.9M726.0 307.9V319.6M727.6 314.5V319.7M729.2 315.1V322.5M730.8 315.0V324.4M732.4 314.4V326.3M734.0 313.3V318.8M735.6 315.2V321.5M737.2 305.3V321.7M738.8 304.2V311.1M740.4 301.6V313.7M742.0 308.0V317.7M743.6 311.1V325.3M745.2 317.8V331.0M746.8 326.0V335.3M748.4 333.1V336.7M750.0 327.0V337.2M751.6 330.0V341.6M753.2 335.4V348.7M754.8 335.9V349.2M756.4 332.8V339.0M758.0 332.0V337.1M759.6 332.6V338.4M761.2 329.6V336.6M762.8 328.6V337.7M764.4 328.1V334.9M766.0 328.5V335.8M767.6 318.3V335.7M769.2 316.2V323.5M770.8 308.6V317.6M772.4 310.9V319.4M774.0 312.2V320.2M775.6 312.9V321.6M777.2 308.5V319.2M778.8 304.4V314.9M780.4 296.5V311.8M782.0 300.2V306.4M783.6 295.7V306.6M785.2 287.0V304.2M786.8 266.6V292.0M788.4 256.2V279.3M790.0 241.5V262.7M791.6 230.7V247.0M793.2 226.5V237.1M794.8 229.4V243.4M796.4 230.9V244.9M798.0 206.0V238.0M799.6 205.7V229.4M801.2 222.8V238.5M802.8 207.9V228.6M804.4 212.3V232.0M806.0 215.2V236.6M807.6 231.1V245.7M809.2 226.1V243.5M810.8 231.5V242.0M812.4 221.5V248.4M814.0 220.5V235.1M815.6 211.4V228.2M817.2 198.8V212.9M818.8 190.9V208.7M820.4 184.1V202.5M822.0 172.5V189.9M823.6 175.6V194.8M825.2 183.1V190.5M826.8 172.6V191.1M828.4 159.3V180.0M830.0 157.7V179.4M831.6 161.6V189.2M833.2 173.1V188.1M834.8 169.9V192.3M836.4 175.1V180.1M838.0 175.8V184.2M839.6 168.5V191.3M841.2 173.6V186.2M842.8 171.1V200.8M844.4 169.7V193.7M846.0 154.8V188.0M847.6 140.2V170.7M849.2 139.3V151.3M850.8 141.8V159.6M852.4 146.0V155.7M854.0 149.6V163.1M855.6 148.0V165.9M857.2 140.3V153.8M858.8 140.6V173.2" stroke="#80107a" stroke-width="0.9" fill="none"/><path d="M58.0 410.4V412.3M67.0 410.6V412.7M69.0 410.2V412.0M71.0 410.3V412.2M72.0 410.1V411.8M73.0 409.8V412.0M78.0 410.2V412.0M79.0 409.5V411.6M83.0 409.6V411.6M86.0 410.8V412.6M94.0 409.0V410.9M95.0 408.9V410.9M96.0 409.1V410.8M98.0 409.6V411.6M99.0 409.2V411.4M100.0 409.4V411.6M101.0 409.4V411.7M102.0 409.6V411.6M104.0 409.5V411.8M105.0 410.0V411.9M106.0 410.5V412.1M108.0 410.2V412.3M110.0 409.6V411.7M112.0 410.1V412.2M114.0 409.9V412.1M117.0 410.4V412.2M121.0 410.1V411.8M123.0 410.2V412.4M127.0 410.7V412.5M128.0 410.4V412.5M129.0 410.3V412.3M130.0 410.4V412.5M133.0 410.5V412.8M134.0 411.0V412.8M137.0 410.5V412.1M139.0 410.6V412.6M140.0 410.5V412.2M142.0 410.5V412.5M143.0 410.5V412.7M144.0 410.6V412.6M146.0 410.6V412.6M150.0 411.3V413.4M158.0 411.5V413.4M160.0 411.9V413.7M161.0 411.7V413.3M165.0 411.9V413.6M169.0 411.8V413.9M170.0 412.4V414.0M175.0 411.6V413.6M177.0 411.7V413.8M179.0 411.7V413.8M188.0 410.9V412.7M189.0 410.4V412.4M190.0 410.7V412.3M191.0 411.1V412.8M193.0 410.2V412.1M197.0 410.4V412.3M198.0 410.1V412.5M200.0 410.6V412.6M201.0 410.0V412.3M205.0 410.2V412.0M206.0 410.3V412.0M207.0 410.2V412.2M209.0 410.0V411.7M210.0 410.0V412.3M216.0 410.2V411.9M217.0 409.9V411.7M223.0 409.7V411.7M224.0 410.0V411.8M226.0 410.0V411.9M230.0 409.8V411.8M231.0 410.5V412.2M233.0 409.8V411.9M234.0 410.1V412.0M235.0 409.6V411.7M236.0 410.2V411.8M237.0 410.3V412.0M240.0 410.0V412.0M241.0 410.1V412.3M242.0 410.1V412.2M243.0 410.1V412.0M244.0 409.9V412.1M247.0 410.1V411.7M248.0 410.0V412.1M251.0 410.3V411.9M252.0 409.8V411.7M253.0 409.9V411.8M255.0 410.1V411.9M256.0 410.5V412.3M260.0 410.0V412.2M261.0 410.4V412.0M262.0 409.9V412.1M264.0 409.8V411.8M265.0 410.0V411.8M266.0 409.8V411.6M267.0 410.3V412.0M270.0 410.1V412.1M273.0 409.9V411.6M276.0 409.9V411.6M287.0 409.8V411.7M288.0 409.6V411.3M290.0 407.4V409.7M291.0 407.7V409.6M293.0 405.9V408.0M294.0 405.5V407.5M295.0 404.4V406.5M296.0 403.4V406.5M297.0 403.7V405.7M298.0 403.2V405.0M299.0 402.1V404.2M300.0 400.6V403.8M301.0 400.8V403.4M302.0 400.2V402.2M304.0 400.0V402.0M305.0 399.7V401.5M306.0 399.2V402.1M307.0 399.4V402.0M308.0 399.9V402.7M309.0 400.2V402.2M310.0 399.9V402.1M312.0 399.8V402.4M313.0 399.8V401.6M314.0 399.5V401.5M315.0 399.7V401.6M317.0 400.7V403.5M318.0 401.6V403.7M319.0 402.2V404.2M320.0 401.3V403.4M323.0 403.3V405.2M324.0 402.4V405.4M325.0 403.6V405.8M326.0 403.4V405.6M327.0 403.5V406.4M328.0 404.7V406.7M329.0 404.4V406.4M330.0 405.2V407.0M332.0 405.8V407.7M333.0 406.0V408.2M334.0 406.1V408.4M335.0 406.0V408.4M336.0 406.6V408.6M338.0 406.4V408.3M339.0 405.6V407.5M340.0 406.2V408.2M341.0 405.4V408.1M343.0 404.4V406.5M344.0 403.3V405.8M345.0 402.0V404.2M346.0 401.9V403.8M347.0 401.9V404.6M348.0 402.8V404.6M349.0 402.3V404.7M352.0 403.5V405.5M353.0 402.9V404.9M355.0 403.2V405.1M357.0 402.7V405.4M359.0 402.9V405.2M360.0 402.8V405.1M361.0 402.2V404.3M363.0 403.2V405.9M364.0 403.8V405.6M367.0 404.4V406.5M368.0 403.7V406.1M369.0 404.2V406.3M370.0 403.9V405.7M372.0 402.4V405.1M375.0 402.6V405.0M377.0 402.3V404.9M379.0 402.4V404.6M381.0 401.5V403.2M382.0 401.7V403.4M383.0 401.5V404.1M384.0 401.5V403.6M385.0 400.8V403.0M387.0 400.8V403.4M388.0 400.9V403.7M389.0 400.4V403.3M390.0 400.5V402.3M393.0 400.1V402.1M394.0 399.4V401.3M395.0 398.7V401.2M397.0 398.8V400.5M399.0 397.4V400.3M400.0 398.3V400.2M401.0 398.4V400.6M402.0 398.1V400.7M403.0 397.7V400.2M404.0 396.7V398.9M407.0 396.5V398.2M408.0 395.2V397.8M409.0 395.2V398.2M410.0 395.9V398.7M411.0 395.3V398.2M412.0 396.9V398.9M413.0 396.4V398.3M415.0 396.0V397.8M416.0 396.2V398.3M417.0 395.6V398.3M418.0 396.0V398.3M419.0 396.3V398.9M420.0 396.3V398.7M421.0 396.2V399.4M422.0 396.7V399.4M423.0 396.7V398.8M425.0 392.4V395.1M426.0 390.8V395.0M427.0 391.8V394.0M428.0 390.0V393.1M429.0 389.5V391.1M430.0 389.5V391.6M431.0 390.7V392.8M432.0 390.0V393.3M433.0 390.5V393.0M434.0 389.9V392.8M435.0 391.0V392.5M436.0 390.8V393.2M437.0 391.4V393.4M438.0 390.6V393.5M439.0 391.2V394.5M440.0 391.8V394.7M441.0 393.3V395.3M442.0 392.8V395.7M443.0 393.2V396.2M445.0 392.2V394.9M447.0 392.2V395.6M448.0 392.5V395.4M449.0 392.0V394.7M450.0 392.0V394.7M451.0 391.6V394.0M452.0 391.0V394.4M453.0 391.9V393.9M454.0 392.6V394.2M455.0 391.1V394.2M457.0 392.1V393.9M458.0 391.4V394.8M459.0 391.9V394.7M460.0 392.2V395.4M461.0 390.7V393.7M462.0 389.3V392.5M463.0 388.1V391.1M464.0 385.6V390.4M465.0 383.0V388.2M466.0 383.1V386.5M467.0 381.0V384.5M468.0 381.0V384.4M469.0 381.8V385.0M470.0 382.3V386.5M471.0 384.7V388.1M472.0 386.7V390.1M473.0 386.7V389.1M474.0 386.7V390.9M475.0 385.8V389.3M476.0 386.6V389.7M477.0 384.3V387.4M478.0 384.8V387.0M479.0 384.5V387.5M480.0 384.3V388.1M481.0 384.4V386.6M482.0 382.8V387.3M483.0 384.5V387.8M484.0 386.2V390.0M485.0 386.0V390.0M486.0 387.3V389.3M487.0 379.8V389.6M490.0 385.7V388.5M491.0 386.9V389.9M492.0 387.8V390.2M493.0 387.8V390.5M494.0 388.9V391.7M495.0 389.1V392.1M496.0 388.7V391.8M497.0 389.5V392.7M498.0 389.6V391.8M499.0 390.3V393.8M500.0 391.3V393.2M501.0 391.2V393.5M502.0 391.5V394.3M503.0 392.4V394.1M504.0 391.7V394.3M505.0 393.1V395.2M506.0 391.8V394.1M507.0 390.7V394.8M508.0 390.9V394.4M509.0 392.1V393.9M510.0 391.6V394.6M511.0 390.9V392.8M512.0 390.6V392.9M513.0 390.6V393.5M514.0 391.8V393.8M515.0 390.5V394.5M516.0 391.2V393.9M517.0 391.7V394.4M519.0 391.6V394.2M520.0 392.0V394.0M521.0 391.0V393.5M522.0 390.9V394.3M523.0 391.1V395.3M524.0 392.9V395.4M525.0 393.6V396.0M526.0 393.9V396.7M527.0 395.1V396.9M528.0 395.3V397.7M529.0 394.8V397.9M530.0 395.9V398.8M531.0 395.2V397.6M532.0 395.2V397.4M533.0 395.7V398.0M534.0 394.6V397.0M535.0 393.6V396.2M536.0 391.9V394.9M537.0 390.3V392.8M538.0 390.9V393.5M539.0 389.2V392.5M540.0 388.6V391.8M542.0 387.0V390.3M543.0 388.1V391.0M544.0 387.5V390.9M545.0 387.7V390.2M546.0 386.6V390.4M547.0 386.4V390.4M548.0 386.7V389.8M549.0 387.3V390.9M550.0 388.3V391.8M551.0 388.7V390.4M552.0 388.1V391.0M554.0 386.2V390.0M555.0 384.8V389.0M556.0 384.4V386.4M557.0 383.8V388.1M558.0 384.0V387.3M559.0 384.5V387.2M560.0 385.0V387.0M561.0 385.3V388.1M562.0 385.7V388.7M563.0 385.8V388.5M564.0 385.9V388.5M565.0 386.7V389.7M566.0 386.6V390.4M567.0 386.8V389.1M568.0 386.7V389.8M569.0 385.7V389.1M570.0 385.1V389.3M571.0 385.0V387.9M572.0 385.0V387.3M573.0 384.2V389.2M574.0 382.5V387.7M575.0 382.1V385.2M576.0 381.3V384.3M577.0 381.6V383.9M578.0 381.3V384.0M579.0 380.3V384.9M580.0 380.4V384.0M581.0 381.2V384.5M582.0 382.5V386.2M583.0 383.0V386.2M584.0 383.3V386.2M585.0 384.4V387.9M586.0 383.0V386.5M587.0 382.5V386.1M588.0 383.6V386.0M589.0 382.7V387.7" stroke="#602060" stroke-width="0.5" fill="none"/><path d="M58.0 411.0V412.0M60.0 411.1V412.1M61.0 411.0V412.0M64.0 410.6V411.6M65.0 410.9V411.9M70.0 411.0V412.0M72.0 410.6V411.6M74.0 410.3V411.3M76.0 410.3V411.3M80.0 410.1V411.1M82.0 410.0V411.0M83.0 410.3V411.3M84.0 410.5V411.5M86.0 410.9V411.9M88.0 410.5V411.5M97.0 409.5V410.5M99.0 409.7V410.7M100.0 410.0V411.0M101.0 410.0V411.0M102.0 410.2V411.2M104.0 410.2V411.2M106.0 410.6V411.6M107.0 410.5V411.5M110.0 410.2V411.2M111.0 410.6V411.6M114.0 410.5V411.5M115.0 410.8V411.8M117.0 410.6V411.6M120.0 410.6V411.6M122.0 410.4V411.4M123.0 410.7V411.7M125.0 410.6V411.6M126.0 410.8V411.8M127.0 411.0V412.0M129.0 410.7V411.7M130.0 411.0V412.0M132.0 411.1V412.1M133.0 411.1V412.1M136.0 411.0V412.0M138.0 410.9V411.9M141.0 410.9V411.9M142.0 411.1V412.1M143.0 411.1V412.1M144.0 411.2V412.2M147.0 411.5V412.5M149.0 411.8V412.8M153.0 411.7V412.7M154.0 411.9V412.9M155.0 412.0V413.0M158.0 412.1V413.1M161.0 412.2V413.2M164.0 412.3V413.3M165.0 412.5V413.5M168.0 412.3V413.3M171.0 412.4V413.4M173.0 412.5V413.5M176.0 412.2V413.2M178.0 412.2V413.2M180.0 412.1V413.1M182.0 411.6V412.6M183.0 411.8V412.8M187.0 411.1V412.1M189.0 411.0V412.0M191.0 411.1V412.1M194.0 410.8V411.8M197.0 410.7V411.7M199.0 410.7V411.7M201.0 410.7V411.7M203.0 410.4V411.4M204.0 410.6V411.6M206.0 410.9V411.9M207.0 410.8V411.8M209.0 410.5V411.5M210.0 410.6V411.6M213.0 410.3V411.3M215.0 410.7V411.7M218.0 410.6V411.6M220.0 410.6V411.6M223.0 410.2V411.2M224.0 410.3V411.3M225.0 410.2V411.2M226.0 410.6V411.6M228.0 410.7V411.7M230.0 410.4V411.4M233.0 410.5V411.5M235.0 410.1V411.1M236.0 410.3V411.3M238.0 410.5V411.5M245.0 410.3V411.3M246.0 410.5V411.5M248.0 410.4V411.4M249.0 410.2V411.2M250.0 410.4V411.4M252.0 410.4V411.4M253.0 410.6V411.6M254.0 410.8V411.8M255.0 410.7V411.7M258.0 410.5V411.5M260.0 410.5V411.5M261.0 410.5V411.5M262.0 410.5V411.5M264.0 410.4V411.4M267.0 410.4V411.4M269.0 410.5V411.5M271.0 410.6V411.6M273.0 410.5V411.5M275.0 410.4V411.4M276.0 410.4V411.4M277.0 410.6V411.6M279.0 410.6V411.6M283.0 410.8V411.8M285.0 410.7V411.7M295.0 405.0V406.0M307.0 400.2V401.2M308.0 400.5V401.5M311.0 400.5V401.5M314.0 400.1V401.1M315.0 400.3V401.3M316.0 400.7V401.7M317.0 401.5V402.5M318.0 401.9V402.9M319.0 402.3V403.3M320.0 402.4V403.4M321.0 402.5V403.5M322.0 403.2V404.2M324.0 403.4V404.4M325.0 403.9V404.9M326.0 404.2V405.2M327.0 404.4V405.4M328.0 404.8V405.8M329.0 405.1V406.1M330.0 405.9V406.9M331.0 406.5V407.5M332.0 406.5V407.5M333.0 406.5V407.5M334.0 406.9V407.9M336.0 406.7V407.7M339.0 406.3V407.3M340.0 406.4V407.4M342.0 405.3V406.3M347.0 402.7V403.7M348.0 403.0V404.0M350.0 403.4V404.4M351.0 403.5V404.5M352.0 403.5V404.5M354.0 403.3V404.3M355.0 403.5V404.5M356.0 403.5V404.5M357.0 403.6V404.6M358.0 403.4V404.4M361.0 403.2V404.2M362.0 403.6V404.6M363.0 404.0V405.2M365.0 404.7V405.7M369.0 404.5V405.5M372.0 403.4V404.4M375.0 403.0V404.0M379.0 402.7V403.7M381.0 402.1V403.1M382.0 402.3V403.3M384.0 401.8V402.8M385.0 401.8V402.8M387.0 401.4V402.4M389.0 401.2V402.2M392.0 400.5V401.5M395.0 399.5V400.5M397.0 398.9V399.9M399.0 398.6V399.6M400.0 398.6V399.6M401.0 398.9V399.9M405.0 397.4V398.4M409.0 396.0V397.0M411.0 396.3V397.3M416.0 396.4V397.4M417.0 396.6V397.6M418.0 397.2V398.2M421.0 397.3V398.3M430.0 390.1V391.1M431.0 391.2V392.2M432.0 391.6V392.6M434.0 391.4V392.4M435.0 391.5V392.5M436.0 391.8V392.8M437.0 392.0V393.0M438.0 392.0V393.0M439.0 392.0V393.0M440.0 392.5V394.0M442.0 393.3V394.3M443.0 393.9V394.9M445.0 392.7V393.7M446.0 393.0V394.0M448.0 393.1V394.1M452.0 392.1V393.1M453.0 392.4V393.4M457.0 392.1V393.1M459.0 392.4V393.5M460.0 392.9V393.9M468.0 382.2V383.2M469.0 383.1V384.1M470.0 384.1V386.2M471.0 386.1V387.5M472.0 387.4V388.4M473.0 387.6V388.7M480.0 385.4V386.4M482.0 384.5V385.7M483.0 385.2V386.2M484.0 386.4V388.2M485.0 387.6V388.6M486.0 388.1V389.3M488.0 381.3V384.0M489.0 384.3V385.8M490.0 386.4V388.2M492.0 388.1V389.1M493.0 388.6V389.7M494.0 389.5V390.5M495.0 389.5V390.5M496.0 389.9V391.1M498.0 390.3V391.3M499.0 390.8V392.7M502.0 392.4V393.4M503.0 392.6V393.6M509.0 392.2V393.2M513.0 391.0V392.2M514.0 392.0V393.0M515.0 392.0V393.0M516.0 392.0V393.0M517.0 392.2V393.6M518.0 392.9V393.9M521.0 392.4V393.4M523.0 392.4V393.8M525.0 393.8V395.2M526.0 394.3V395.3M527.0 395.1V396.3M528.0 395.4V396.4M529.0 395.7V396.7M530.0 396.6V397.6M532.0 395.9V396.9M534.0 395.4V396.4M540.0 389.5V390.5M543.0 388.3V389.3M546.0 387.6V388.7M548.0 388.0V389.0M549.0 388.9V390.8M556.0 385.3V386.3M558.0 384.7V385.7M559.0 384.8V386.1M560.0 385.3V386.3M561.0 386.0V387.0M564.0 387.0V388.1M565.0 387.4V388.4M569.0 386.7V388.1M572.0 386.1V387.1M575.0 383.6V384.6M577.0 381.9V382.9M578.0 381.9V382.9M580.0 381.9V382.9M581.0 382.8V383.9M582.0 383.3V384.6M583.0 383.7V384.7M584.0 384.5V385.5M585.0 384.6V386.1M587.0 384.5V385.5M589.0 384.6V386.4" stroke="#0000e0" stroke-width="0.9" fill="none"/><path d="M59.0 411.0V412.0M62.0 411.3V412.3M63.0 410.8V411.8M66.0 411.0V412.0M67.0 411.2V412.2M68.0 410.9V411.9M69.0 410.8V411.8M71.0 411.0V412.0M73.0 410.5V411.5M75.0 410.3V411.3M77.0 410.2V411.2M78.0 410.4V411.4M79.0 410.1V411.1M81.0 410.2V411.2M85.0 410.8V411.8M87.0 410.9V411.9M89.0 410.5V411.5M90.0 410.2V411.2M91.0 410.2V411.2M92.0 410.0V411.0M93.0 409.4V410.4M94.0 409.3V410.3M95.0 409.4V410.4M96.0 409.2V410.2M98.0 409.8V410.8M103.0 410.3V411.3M105.0 410.5V411.5M108.0 410.6V411.6M109.0 410.3V411.3M112.0 410.6V411.6M113.0 410.6V411.6M116.0 410.7V411.7M118.0 410.8V411.8M119.0 410.6V411.6M121.0 410.6V411.6M124.0 410.8V411.8M128.0 411.0V412.0M131.0 411.1V412.1M134.0 411.2V412.2M135.0 411.1V412.1M137.0 411.0V412.0M139.0 411.2V412.2M140.0 411.2V412.2M145.0 411.4V412.4M146.0 411.2V412.2M148.0 411.7V412.7M150.0 411.8V412.8M151.0 411.7V412.7M152.0 411.8V412.8M156.0 412.0V413.0M157.0 412.0V413.0M159.0 412.2V413.2M160.0 412.1V413.1M162.0 412.4V413.4M163.0 412.4V413.4M166.0 412.5V413.5M167.0 412.3V413.3M169.0 412.3V413.3M170.0 412.4V413.4M172.0 412.5V413.5M174.0 412.4V413.4M175.0 412.1V413.1M177.0 412.3V413.3M179.0 412.2V413.2M181.0 412.0V413.0M184.0 411.8V412.8M185.0 411.7V412.7M186.0 411.5V412.5M188.0 411.1V412.1M190.0 411.2V412.2M192.0 410.9V411.9M193.0 410.8V411.8M195.0 411.0V412.0M196.0 410.7V411.7M198.0 410.8V411.8M200.0 410.9V411.9M202.0 410.6V411.6M205.0 410.7V411.7M208.0 410.6V411.6M211.0 410.4V411.4M212.0 410.3V411.3M214.0 410.5V411.5M216.0 410.7V411.7M217.0 410.4V411.4M219.0 410.8V411.8M221.0 410.6V411.6M222.0 410.4V411.4M227.0 410.7V411.7M229.0 410.5V411.5M231.0 410.6V411.6M232.0 410.5V411.5M234.0 410.5V411.5M237.0 410.5V411.5M239.0 410.8V411.8M240.0 410.7V411.7M241.0 410.7V411.7M242.0 410.8V411.8M243.0 410.7V411.7M244.0 410.4V411.4M247.0 410.6V411.6M251.0 410.4V411.4M256.0 410.7V411.7M257.0 410.5V411.5M259.0 410.4V411.4M263.0 410.4V411.4M265.0 410.5V411.5M266.0 410.4V411.4M268.0 410.4V411.4M270.0 410.4V411.4M272.0 410.5V411.5M274.0 410.7V411.7M278.0 410.6V411.6M280.0 410.8V411.8M281.0 410.5V411.5M282.0 410.6V411.6M284.0 410.6V411.6M286.0 410.6V411.6M287.0 410.2V411.2M288.0 409.7V410.7M289.0 409.1V410.1M290.0 408.2V409.2M291.0 407.8V408.8M292.0 406.8V408.0M293.0 406.2V407.2M294.0 405.6V406.6M296.0 404.3V405.5M297.0 403.8V404.8M298.0 403.4V404.4M299.0 402.7V404.1M300.0 401.7V402.7M301.0 401.6V402.6M302.0 401.1V402.1M303.0 400.8V401.8M304.0 400.7V401.7M305.0 400.5V401.5M306.0 400.4V401.4M309.0 400.7V401.7M310.0 400.5V401.5M312.0 400.7V401.7M313.0 400.5V401.5M323.0 403.3V404.3M335.0 406.8V407.8M337.0 406.8V407.8M338.0 406.6V407.6M341.0 405.8V407.4M343.0 404.7V405.8M344.0 403.8V404.9M345.0 403.0V404.0M346.0 402.6V403.6M349.0 403.0V404.0M353.0 403.7V404.7M359.0 403.4V404.4M360.0 403.3V404.3M364.0 404.4V405.4M366.0 405.3V406.3M367.0 404.8V405.8M368.0 404.6V405.6M370.0 404.1V405.1M371.0 403.5V404.5M373.0 403.4V404.4M374.0 403.2V404.2M376.0 403.1V404.1M377.0 403.1V404.1M378.0 402.9V403.9M380.0 402.8V403.8M383.0 402.3V403.3M386.0 401.6V402.6M388.0 401.6V402.6M390.0 401.2V402.2M391.0 400.6V401.6M393.0 400.3V401.3M394.0 399.8V400.8M396.0 399.5V400.5M398.0 399.1V400.1M402.0 398.9V399.9M403.0 398.1V399.1M404.0 397.9V398.9M406.0 397.1V398.5M407.0 396.5V397.5M408.0 395.9V396.9M410.0 396.4V397.4M412.0 397.1V398.1M413.0 396.9V397.9M414.0 397.0V398.0M415.0 396.7V397.7M419.0 397.4V398.4M420.0 397.3V398.3M422.0 397.6V398.6M423.0 396.9V398.2M424.0 394.6V397.1M425.0 393.9V394.9M426.0 391.9V394.3M427.0 391.9V392.9M428.0 390.4V391.8M429.0 390.1V391.1M433.0 391.8V392.8M441.0 393.4V394.4M444.0 393.4V394.7M447.0 393.0V394.4M449.0 393.5V394.5M450.0 393.1V394.3M451.0 392.5V393.6M454.0 392.7V393.7M455.0 392.3V393.3M456.0 392.2V393.2M458.0 392.3V393.3M461.0 391.9V393.4M462.0 390.9V391.9M463.0 389.8V390.9M464.0 386.8V390.0M465.0 384.7V387.0M466.0 383.4V384.7M467.0 382.4V383.7M474.0 388.4V389.4M475.0 387.6V389.1M476.0 387.1V388.2M477.0 385.9V387.0M478.0 384.9V385.9M479.0 385.0V386.0M481.0 385.1V386.4M487.0 381.1V389.0M491.0 388.3V389.3M497.0 390.7V391.7M500.0 392.0V393.0M501.0 391.9V392.9M504.0 392.7V393.7M505.0 393.2V394.2M506.0 392.6V393.6M507.0 392.3V393.3M508.0 392.2V393.3M510.0 392.0V393.0M511.0 391.2V392.2M512.0 390.8V391.8M519.0 392.8V393.8M520.0 392.3V393.3M522.0 392.5V393.5M524.0 393.1V394.1M531.0 396.2V397.2M533.0 395.8V396.8M535.0 394.2V395.7M536.0 393.1V394.2M537.0 391.8V392.8M538.0 391.5V392.5M539.0 390.2V391.5M541.0 388.6V389.6M542.0 388.6V389.6M544.0 388.0V389.4M545.0 387.8V388.8M547.0 388.1V389.1M550.0 389.6V391.1M551.0 388.9V389.9M552.0 388.3V389.5M553.0 387.8V388.8M554.0 387.3V388.3M555.0 385.9V387.4M557.0 385.1V386.2M562.0 386.8V387.8M563.0 387.1V388.1M566.0 387.6V388.6M567.0 387.7V388.7M568.0 387.3V388.3M570.0 386.9V387.9M571.0 386.4V387.4M573.0 386.0V387.4M574.0 384.4V386.3M576.0 382.4V383.8M579.0 382.1V383.1M586.0 384.7V386.3M588.0 384.9V385.9" stroke="#e00000" stroke-width="0.9" fill="none"/><path d="M590.0 386.4V387.4M607.6 369.2V370.2M609.2 370.5V371.9M620.4 359.6V360.6M625.2 357.8V358.8M626.8 357.9V358.9M633.2 354.2V355.2M634.8 354.2V355.2M636.4 354.1V359.4M638.0 359.1V360.8M641.2 360.7V361.9M644.4 359.5V361.0M646.0 360.6V362.4M647.6 362.5V364.3M654.0 355.2V360.7M662.0 350.4V352.8M663.6 351.6V353.8M668.4 352.5V355.0M670.0 355.6V356.6M676.4 347.1V348.1M686.0 329.7V337.2M687.6 337.2V339.7M689.2 339.7V342.7M697.2 334.1V341.0M698.8 340.6V343.7M702.0 341.4V342.8M706.8 339.9V341.0M708.4 341.0V342.0M713.2 339.1V340.1M714.8 338.7V339.7M721.2 321.5V323.9M726.0 313.0V316.1M727.6 315.8V317.1M730.8 318.4V319.5M734.0 317.3V318.5M740.4 306.6V313.4M742.0 311.7V315.4M743.6 314.0V321.5M745.2 321.1V328.1M746.8 326.6V335.1M751.6 331.3V337.3M753.2 336.3V345.3M759.6 334.0V335.0M762.8 333.1V334.1M772.4 313.0V314.0M774.0 312.5V317.0M782.0 301.9V302.9M794.8 230.7V240.5M799.6 212.5V229.1M804.4 216.7V224.0M806.0 224.5V234.4M807.6 232.6V236.6M810.8 233.1V238.7M823.6 179.0V188.3M831.6 169.9V183.1M834.8 179.4V181.6M836.4 178.7V179.7M842.8 182.0V190.9M854.0 152.5V157.1M858.8 145.1V160.6" stroke="#0000e0" stroke-width="1.6" fill="none"/><path d="M591.6 385.6V387.0M593.2 385.0V386.0M594.8 384.5V385.5M596.4 383.5V385.5M598.0 381.4V383.3M599.6 380.7V382.1M601.2 378.6V379.9M602.8 376.2V378.8M604.4 373.0V376.3M606.0 368.7V373.8M610.8 371.7V372.7M612.4 367.8V371.6M614.0 365.2V367.3M615.6 362.5V365.6M617.2 360.5V361.7M618.8 360.3V361.3M622.0 359.0V360.0M623.6 359.0V360.0M628.4 358.7V359.7M630.0 358.4V359.5M631.6 354.7V358.1M639.6 359.8V361.8M642.8 360.5V361.6M649.2 361.9V365.3M650.8 359.9V361.4M652.4 354.5V359.0M655.6 360.6V361.6M657.2 356.2V361.9M658.8 353.6V355.0M660.4 350.4V352.8M665.2 353.5V354.5M666.8 352.5V353.5M671.6 353.3V357.2M673.2 350.6V352.7M674.8 348.4V350.9M678.0 345.5V347.8M679.6 341.9V344.0M681.2 339.1V342.3M682.8 333.4V339.0M684.4 328.6V333.2M690.8 340.2V342.7M692.4 336.0V341.3M694.0 335.2V336.6M695.6 334.9V336.2M700.4 342.6V345.0M703.6 341.1V342.1M705.2 338.8V341.7M710.0 339.4V341.3M711.6 339.0V340.3M716.4 336.3V339.1M718.0 325.5V338.0M719.6 323.2V324.9M722.8 317.0V324.8M724.4 313.5V316.0M729.2 317.4V318.9M732.4 317.2V321.0M735.6 316.6V317.6M737.2 309.6V318.0M738.8 306.7V310.5M748.4 333.5V335.0M750.0 331.4V333.3M754.8 337.6V345.3M756.4 336.0V337.0M758.0 334.1V335.6M761.2 333.5V334.5M764.4 331.5V333.5M766.0 331.6V332.6M767.6 319.5V331.7M769.2 318.1V319.7M770.8 312.9V316.1M775.6 315.1V318.3M777.2 312.7V316.0M778.8 307.7V311.7M780.4 301.2V309.8M783.6 296.8V302.7M785.2 289.0V298.7M786.8 271.2V288.6M788.4 260.9V271.4M790.0 242.2V259.9M791.6 238.4V243.5M793.2 231.6V236.8M796.4 233.3V243.1M798.0 214.1V230.5M801.2 224.9V231.4M802.8 216.9V226.4M809.2 230.3V235.5M812.4 229.9V240.1M814.0 222.8V228.0M815.6 212.1V219.3M817.2 199.8V212.4M818.8 197.8V198.8M820.4 184.4V194.3M822.0 180.5V181.5M825.2 186.1V187.1M826.8 176.3V184.0M828.4 169.8V174.2M830.0 168.8V169.9M833.2 179.2V182.4M838.0 179.3V181.9M839.6 177.0V182.7M841.2 178.4V179.4M844.4 181.3V187.2M846.0 165.8V181.4M847.6 153.3V170.5M849.2 148.0V149.8M850.8 147.9V148.9M852.4 148.4V149.4M855.6 155.6V157.5M857.2 149.2V150.9" stroke="#e00000" stroke-width="1.6" fill="none"/><path d="M647.5 364.5V366" stroke="#3010b0" stroke-width="1"/><path d="M652.5 352V354.0" stroke="#3010b0" stroke-width="1"/><path d="M688.5 341.0V352" stroke="#3010b0" stroke-width="1"/><path d="M753.5 347.0V348" stroke="#3010b0" stroke-width="1"/><path d="M795.5 240.0V252" stroke="#3010b0" stroke-width="1"/><path d="M807.5 238.0V252" stroke="#3010b0" stroke-width="1"/><path d="M811.5 238.0V253" stroke="#3010b0" stroke-width="1"/><path d="M683.5 328V332.0" stroke="#3010b0" stroke-width="1"/><path d="M739.5 305V306.5" stroke="#3010b0" stroke-width="1"/><path d="M798.5 216V218.0" stroke="#3010b0" stroke-width="1"/><path d="M803.5 216V218.0" stroke="#3010b0" stroke-width="1"/><path d="M850.5 141V145.0" stroke="#3010b0" stroke-width="1"/><path d="M58.0 412.0 L66.9 412.0 L84.6 411.9 L111.2 411.8 L146.8 411.7 L178.8 411.6 L207.2 411.5 L232.2 411.5 L253.8 411.5 L273.2 411.3 L290.8 411.0 L306.2 410.6 L319.8 409.9 L334.0 409.3 L349.0 408.6 L364.8 407.9 L381.2 407.1 L394.5 406.5 L404.5 405.9 L411.2 405.5 L414.8 405.1 L421.1 404.5 L430.4 403.5 L442.5 402.2 L457.5 400.7 L471.2 399.2 L483.8 398.0 L495.0 396.9 L505.0 395.9 L515.0 395.0 L525.0 394.2 L535.0 393.4 L545.0 392.6 L555.0 391.9 L565.0 391.2 L575.0 390.6 L585.0 389.9 L594.8 389.2 L604.2 388.3 L613.5 387.3 L622.5 386.2 L631.9 384.8 L641.8 383.0 L652.1 380.9 L662.9 378.6 L673.2 376.0 L683.2 373.2 L692.9 370.1 L702.1 366.9 L710.2 363.9 L717.2 361.2 L723.1 358.8 L727.9 356.7 L733.0 354.7 L738.5 352.7 L744.4 350.9 L750.6 349.1 L756.6 347.4 L762.2 345.7 L767.5 344.1 L772.5 342.4 L777.1 340.7 L781.2 338.9 L784.9 337.0 L788.1 335.0 L791.0 333.1 L793.5 331.4 L795.6 329.8 L797.4 328.2 L799.4 326.5 L801.8 324.5 L804.5 322.2 L807.5 319.8 L810.7 316.9 L814.1 313.6 L817.6 310.0 L821.4 306.0 L824.8 302.6 L827.8 299.7 L830.4 297.4 L832.6 295.6 L835.1 293.6 L837.7 291.4 L840.5 288.9 L843.5 286.1 L846.2 283.4 L848.6 280.8 L850.6 278.2 L852.4 275.8 L853.7 273.9 L854.6 272.6 L855.0 272.0" fill="none" stroke="#e000e0" stroke-width="1.0" stroke-linejoin="round"/><path d="M58.0 412.0 L66.9 412.0 L84.6 412.0 L111.2 412.0 L146.8 412.0 L181.2 411.7 L214.8 411.0 L247.2 409.9 L278.8 408.6 L307.4 407.4 L333.1 406.5 L356.0 405.8 L376.0 405.2 L395.0 404.3 L413.0 402.9 L430.0 401.1 L446.0 398.9 L459.9 397.0 L471.6 395.6 L481.2 394.6 L488.8 393.9 L498.1 393.2 L509.4 392.5 L522.5 391.7 L537.5 390.8 L551.2 390.1 L563.8 389.5 L575.0 389.1 L585.0 388.9 L594.8 388.0 L604.2 386.6 L613.5 384.6 L622.5 381.9 L629.9 379.8 L635.8 378.1 L640.1 376.8 L642.9 376.0 L646.7 375.0 L651.6 373.7 L657.5 372.3 L664.5 370.5 L671.3 368.6 L677.9 366.6 L684.4 364.2 L690.6 361.8 L696.3 359.4 L701.4 357.3 L706.0 355.4 L710.0 353.6 L714.5 351.6 L719.5 349.4 L725.0 346.9 L731.0 344.1 L736.6 341.8 L741.7 339.8 L746.4 338.3 L750.6 337.2 L754.6 336.1 L758.4 335.1 L761.9 334.2 L765.1 333.3 L768.5 332.3 L772.0 331.3 L775.6 330.1 L779.4 328.9 L782.7 327.5 L785.6 326.0 L788.0 324.4 L790.0 322.6 L791.9 320.8 L793.8 318.9 L795.6 317.0 L797.4 315.0 L799.1 313.1 L800.7 311.2 L802.2 309.4 L803.8 307.6 L805.2 305.8 L806.8 303.9 L808.2 302.0 L809.8 300.0 L811.5 297.8 L813.5 295.4 L815.8 292.9 L818.2 290.1 L821.0 286.9 L824.0 283.3 L827.2 279.2 L830.8 274.8 L833.9 270.5 L836.8 266.5 L839.4 262.8 L841.6 259.2 L843.9 255.6 L846.3 251.7 L848.8 247.6 L851.2 243.4 L853.1 240.2 L854.4 238.1 L855.0 237.0" fill="none" stroke="#0000d0" stroke-width="1.0" stroke-linejoin="round"/><path d="M58.0 411.5 L66.9 411.5 L84.6 411.5 L111.2 411.5 L146.8 411.5 L178.8 411.4 L207.2 411.2 L232.2 410.9 L253.8 410.6 L272.0 410.2 L287.0 409.8 L298.8 409.4 L307.2 409.1 L314.0 408.6 L319.0 408.1 L322.2 407.6 L323.8 406.9 L329.9 406.3 L340.6 405.6 L356.0 404.9 L376.0 404.1 L395.0 402.9 L413.0 401.3 L430.0 399.2 L446.0 396.8 L459.2 394.7 L469.8 393.1 L477.5 391.9 L482.5 391.1 L488.1 390.6 L494.4 390.2 L501.2 390.0 L508.8 390.0 L515.6 390.1 L521.9 390.4 L527.5 390.8 L532.5 391.2 L538.1 391.5 L544.4 391.5 L551.2 391.2 L558.8 390.8 L566.1 390.2 L573.4 389.5 L580.5 388.7 L587.5 387.8 L593.8 386.8 L599.4 385.8 L604.4 384.6 L608.6 383.4 L613.1 381.7 L617.9 379.5 L622.9 376.8 L628.1 373.7 L633.6 370.9 L639.2 368.4 L645.0 366.2 L651.0 364.3 L657.1 362.6 L663.2 360.9 L669.4 359.4 L675.6 358.1 L681.2 356.7 L686.2 355.2 L690.6 353.8 L694.4 352.2 L698.2 350.6 L702.1 348.7 L706.0 346.6 L710.0 344.4 L713.9 342.3 L717.6 340.5 L721.2 338.9 L724.8 337.6 L728.3 336.1 L731.9 334.4 L735.6 332.7 L739.4 330.8 L742.5 329.3 L745.0 328.1 L746.9 327.2 L748.1 326.8 L750.0 326.3 L752.5 326.0 L755.6 325.8 L759.4 325.7 L763.1 325.5 L766.9 325.2 L770.6 324.9 L774.4 324.6 L777.7 324.0 L780.6 323.3 L783.0 322.5 L785.0 321.5 L786.8 320.2 L788.4 318.8 L789.9 317.0 L791.1 315.0 L792.5 312.6 L794.0 309.9 L795.6 306.8 L797.4 303.2 L799.3 299.2 L801.4 294.6 L803.8 289.4 L806.2 283.6 L808.9 277.6 L811.6 271.2 L814.5 264.5 L817.5 257.5 L820.2 251.1 L822.8 245.2 L825.0 239.9 L827.0 235.1 L828.9 230.8 L830.6 226.8 L832.2 223.1 L833.8 219.9 L835.2 217.0 L836.6 214.5 L837.9 212.4 L839.1 210.6 L840.9 208.4 L843.3 205.6 L846.2 202.4 L849.8 198.6 L852.4 195.8 L854.1 193.9 L855.0 193.0" fill="none" stroke="#20e020" stroke-width="1.0" stroke-linejoin="round"/><path d="M58.0 411.3 L66.9 411.3 L84.6 411.3 L111.2 411.4 L146.8 411.4 L178.8 411.4 L207.2 411.3 L232.2 411.1 L253.8 410.9 L270.5 410.3 L282.5 409.5 L289.8 408.4 L292.2 407.1 L295.3 405.8 L298.9 404.8 L303.1 403.9 L307.9 403.1 L312.1 402.6 L315.7 402.4 L318.8 402.4 L321.2 402.6 L323.8 402.9 L326.2 403.3 L328.8 403.8 L331.2 404.2 L333.8 404.6 L336.2 404.9 L338.8 405.0 L341.2 405.0 L345.6 404.9 L351.9 404.8 L360.0 404.6 L370.0 404.4 L378.8 403.9 L386.2 403.3 L392.5 402.5 L397.5 401.5 L402.8 400.4 L408.4 399.2 L414.4 397.9 L420.6 396.6 L427.2 395.4 L434.1 394.6 L441.2 393.9 L448.8 393.6 L455.0 393.1 L460.0 392.5 L463.8 391.9 L466.2 391.1 L468.8 390.3 L471.2 389.5 L473.8 388.7 L476.2 387.8 L479.4 387.3 L483.1 387.2 L487.5 387.4 L492.5 388.1 L497.5 388.7 L502.5 389.3 L507.5 389.9 L512.5 390.6 L517.5 390.9 L522.5 391.1 L527.5 390.9 L532.5 390.6 L537.5 390.2 L542.5 389.7 L547.5 389.2 L552.5 388.8 L558.1 388.2 L564.4 387.8 L571.2 387.2 L578.8 386.8 L585.0 386.2 L590.0 385.8 L593.8 385.2 L596.2 384.8 L598.9 383.9 L601.6 382.8 L604.5 381.4 L607.5 379.6 L610.6 377.8 L613.7 375.8 L616.9 373.6 L620.1 371.4 L623.2 369.2 L626.2 367.2 L629.1 365.4 L631.9 363.6 L634.8 362.4 L637.9 361.7 L641.2 361.6 L644.8 361.9 L648.5 361.9 L652.5 361.5 L656.8 360.6 L661.2 359.4 L665.4 358.0 L669.1 356.6 L672.5 355.1 L675.5 353.4 L678.4 351.8 L681.1 350.2 L683.8 348.6 L686.2 346.9 L688.8 345.6 L691.2 344.6 L693.8 343.9 L696.2 343.6 L699.1 343.1 L702.2 342.5 L705.6 341.9 L709.4 341.1 L712.5 340.1 L715.0 338.9 L716.9 337.4 L718.1 335.6 L719.7 333.6 L721.6 331.4 L723.8 328.9 L726.2 326.1 L728.8 323.7 L731.2 321.6 L733.8 319.8 L736.2 318.2 L738.4 317.2 L740.3 316.6 L741.9 316.4 L743.1 316.6 L744.5 317.2 L746.0 318.1 L747.6 319.2 L749.4 320.8 L751.0 322.3 L752.5 323.9 L753.9 325.6 L755.1 327.4 L756.4 329.2 L757.8 331.1 L759.2 333.0 L760.8 335.0 L762.3 336.2 L763.9 336.6 L765.6 336.1 L767.4 334.9 L769.0 333.5 L770.5 332.0 L771.9 330.4 L773.1 328.6 L774.4 326.7 L775.6 324.6 L776.9 322.2 L778.1 319.8 L779.5 316.9 L781.0 313.6 L782.6 310.0 L784.4 306.0 L785.9 302.1 L787.1 298.2 L788.1 294.4 L788.9 290.6 L789.8 286.1 L790.8 280.9 L791.9 274.9 L793.1 268.1 L794.4 261.9 L795.6 256.3 L796.9 251.2 L798.1 246.8 L799.2 242.9 L800.2 239.6 L801.1 237.0 L801.9 235.0 L802.8 233.3 L803.8 231.9 L804.9 230.9 L806.1 230.1 L807.4 229.6 L808.6 229.4 L809.9 229.4 L811.1 229.6 L812.3 229.7 L813.4 229.6 L814.5 229.2 L815.5 228.8 L816.6 227.9 L817.7 226.8 L818.9 225.4 L820.1 223.6 L821.6 221.3 L823.2 218.4 L825.0 215.0 L827.0 211.0 L829.1 207.2 L831.4 203.8 L833.8 200.5 L836.2 197.5 L838.8 194.4 L841.2 191.3 L843.8 188.1 L846.2 184.9 L848.4 181.8 L850.3 178.9 L851.9 176.2 L853.1 173.8 L854.4 171.4 L855.6 169.3 L856.9 167.4 L858.1 165.6 L859.1 164.3 L859.7 163.4 L860.0 163.0" fill="none" stroke="#c00000" stroke-width="1.0" stroke-linejoin="round"/><path d="M286.0 410.6 L286.1 410.5 L286.4 410.4 L286.8 410.3 L287.2 410.0 L287.8 409.8 L288.2 409.5 L288.8 409.2 L289.2 408.9 L289.8 408.6 L290.2 408.2 L290.8 407.9 L291.2 407.6 L291.8 407.2 L292.2 406.9 L292.8 406.6 L293.2 406.3 L293.8 405.9 L294.2 405.6 L294.8 405.3 L295.2 405.0 L295.8 404.8 L296.2 404.5 L296.8 404.2 L297.2 403.9 L297.8 403.7 L298.2 403.4 L298.8 403.2 L299.2 402.9 L299.8 402.7 L300.2 402.5 L300.8 402.3 L301.2 402.1 L301.8 401.9 L302.2 401.8 L302.8 401.6 L303.2 401.5 L303.8 401.4 L304.2 401.3 L304.8 401.2 L305.2 401.1 L305.8 401.0 L306.2 401.0 L306.8 400.9 L307.2 400.9 L307.8 400.8 L308.2 400.8 L308.8 400.7 L309.2 400.7 L309.8 400.7 L310.2 400.7 L310.8 400.7 L311.2 400.7 L311.8 400.7 L312.2 400.8 L312.8 400.8 L313.2 400.9 L313.8 401.0 L314.2 401.1 L314.8 401.2 L315.2 401.3 L315.8 401.5 L316.2 401.6 L316.8 401.8 L317.2 401.9 L317.8 402.1 L318.2 402.3 L318.8 402.5 L319.2 402.7 L319.8 402.8 L320.2 403.0 L320.8 403.2 L321.2 403.4 L321.8 403.6 L322.2 403.7 L322.8 403.9 L323.2 404.1 L323.8 404.3 L324.2 404.4 L324.8 404.6 L325.2 404.8 L325.8 404.9 L326.2 405.1 L326.8 405.3 L327.2 405.5 L327.8 405.6 L328.2 405.8 L328.8 406.0 L329.2 406.2 L329.8 406.3 L330.2 406.5 L330.8 406.6 L331.2 406.8 L331.8 406.9 L332.2 407.0 L332.8 407.1 L333.2 407.1 L333.8 407.2 L334.2 407.2 L334.8 407.3 L335.2 407.3 L335.8 407.3 L336.2 407.2 L336.8 407.2 L337.2 407.1 L337.8 407.0 L338.2 406.9 L338.8 406.8 L339.2 406.6 L339.8 406.4 L340.2 406.2 L340.8 406.0 L341.2 405.7 L341.8 405.4 L342.2 405.2 L342.8 404.9 L343.2 404.6 L343.8 404.4 L344.2 404.2 L344.8 404.0 L345.2 403.9 L345.8 403.7 L346.2 403.7 L346.8 403.6 L347.2 403.6 L347.8 403.6 L348.2 403.6 L348.8 403.7 L349.2 403.7 L349.8 403.8 L350.2 403.8 L350.8 403.9 L351.2 403.9 L351.8 403.9 L352.2 404.0 L352.8 404.0 L353.2 404.0 L353.8 404.0 L354.2 404.0 L354.8 404.0 L355.2 404.0 L355.8 404.0 L356.2 404.0 L356.8 404.0 L357.2 404.0 L357.8 404.0 L358.2 404.1 L358.8 404.1 L359.2 404.1 L359.8 404.2 L360.2 404.3 L360.8 404.3 L361.2 404.4 L361.8 404.5 L362.2 404.6 L362.8 404.7 L363.2 404.8 L363.8 404.9 L364.2 404.9 L364.8 405.0 L365.2 405.0 L365.8 405.0 L366.2 405.0 L366.8 405.0 L367.2 405.0 L367.8 404.9 L368.2 404.9 L368.8 404.8 L369.2 404.7 L369.8 404.6 L370.2 404.5 L370.8 404.4 L371.2 404.3 L371.8 404.2 L372.2 404.1 L372.8 404.0 L373.2 404.0 L373.8 403.9 L374.2 403.8 L374.8 403.8 L375.2 403.7 L375.8 403.7 L376.2 403.6 L376.8 403.6 L377.2 403.5 L377.8 403.5 L378.2 403.4 L378.8 403.4 L379.2 403.3 L379.8 403.3 L380.2 403.2 L380.8 403.1 L381.2 403.1 L381.8 403.0 L382.2 402.9 L382.8 402.8 L383.2 402.7 L383.8 402.7 L384.2 402.6 L384.8 402.5 L385.2 402.4 L385.8 402.3 L386.2 402.2 L386.8 402.1 L387.2 402.0 L387.8 401.9 L388.2 401.8 L388.8 401.7 L389.2 401.6 L389.8 401.5 L390.2 401.4 L390.8 401.3 L391.2 401.2 L391.8 401.0 L392.2 400.9 L392.8 400.8 L393.2 400.7 L393.8 400.6 L394.2 400.4 L394.8 400.3 L395.2 400.2 L395.8 400.1 L396.2 399.9 L396.8 399.8 L397.2 399.7 L397.8 399.6 L398.2 399.5 L398.8 399.4 L399.2 399.2 L399.8 399.1 L400.2 399.0 L400.8 398.9 L401.2 398.8 L401.8 398.7 L402.2 398.6 L402.8 398.4 L403.2 398.3 L403.8 398.2 L404.2 398.0 L404.8 397.9 L405.2 397.7 L405.8 397.6 L406.2 397.4 L406.8 397.3 L407.2 397.2 L407.8 397.1 L408.2 397.0 L408.8 397.0 L409.2 396.9 L409.8 396.9 L410.2 396.9 L410.8 397.0 L411.2 397.0 L411.8 397.1 L412.2 397.1 L412.8 397.2 L413.2 397.2 L413.8 397.3 L414.2 397.4 L414.8 397.4 L415.2 397.5 L415.8 397.5 L416.2 397.6 L416.8 397.6 L417.2 397.6 L417.8 397.7 L418.2 397.7 L418.8 397.7 L419.2 397.7 L419.8 397.6 L420.2 397.5 L420.8 397.3 L421.2 397.0 L421.8 396.7 L422.2 396.4 L422.8 396.0 L423.2 395.6 L423.8 395.1 L424.2 394.7 L424.8 394.2 L425.2 393.7 L425.8 393.2 L426.2 392.8 L426.8 392.4 L427.2 392.1 L427.8 391.9 L428.2 391.7 L428.8 391.5 L429.2 391.5 L429.8 391.5 L430.2 391.5 L430.8 391.5 L431.2 391.6 L431.8 391.7 L432.2 391.8 L432.8 392.0 L433.2 392.1 L433.8 392.3 L434.2 392.4 L434.8 392.5 L435.2 392.6 L435.8 392.7 L436.2 392.8 L436.8 392.9 L437.2 393.0 L437.8 393.1 L438.2 393.2 L438.8 393.3 L439.2 393.3 L439.8 393.4 L440.2 393.5 L440.8 393.5 L441.2 393.6 L441.8 393.7 L442.2 393.7 L442.8 393.7 L443.2 393.8 L443.8 393.8 L444.2 393.8 L444.8 393.8 L445.2 393.8 L445.8 393.7 L446.2 393.7 L446.8 393.7 L447.2 393.6 L447.8 393.6 L448.2 393.5 L448.8 393.5 L449.2 393.4 L449.8 393.3 L450.2 393.3 L450.8 393.2 L451.2 393.2 L451.8 393.2 L452.2 393.1 L452.8 393.1 L453.2 393.1 L453.8 393.0 L454.2 393.0 L454.8 393.0 L455.2 393.0 L455.8 393.0 L456.2 393.0 L456.8 392.9 L457.2 392.9 L457.8 392.8 L458.2 392.7 L458.8 392.6 L459.2 392.4 L459.8 392.1 L460.2 391.8 L460.8 391.3 L461.2 390.8 L461.8 390.2 L462.2 389.6 L462.8 388.9 L463.2 388.2 L463.8 387.5 L464.2 386.9 L464.8 386.3 L465.2 385.8 L465.8 385.4 L466.2 385.0 L466.8 384.8 L467.2 384.6 L467.8 384.6 L468.2 384.7 L468.8 384.8 L469.2 385.1 L469.8 385.4 L470.2 385.7 L470.8 386.1 L471.2 386.4 L471.8 386.7 L472.2 386.9 L472.8 387.1 L473.2 387.1 L473.8 387.1 L474.2 387.1 L474.8 387.0 L475.2 386.9 L475.8 386.7 L476.2 386.6 L476.8 386.4 L477.2 386.2 L477.8 386.1 L478.2 386.0 L478.8 385.9 L479.2 385.8 L479.8 385.8 L480.2 385.9 L480.8 386.0 L481.2 386.2 L481.8 386.3 L482.2 386.4 L482.8 386.4 L483.2 386.4 L483.8 386.4 L484.2 386.3 L484.8 386.3 L485.2 386.2 L485.8 386.2 L486.2 386.1 L486.8 386.2 L487.2 386.3 L487.8 386.3 L488.2 386.4 L488.8 386.4 L489.2 386.4 L489.8 386.6 L490.2 386.9 L490.8 387.3 L491.2 387.8 L491.8 388.2 L492.2 388.6 L492.8 389.0 L493.2 389.2 L493.8 389.5 L494.2 389.7 L494.8 390.0 L495.2 390.2 L495.8 390.4 L496.2 390.7 L496.8 390.9 L497.2 391.1 L497.8 391.3 L498.2 391.5 L498.8 391.7 L499.2 391.9 L499.8 392.1 L500.2 392.2 L500.8 392.3 L501.2 392.5 L501.8 392.6 L502.2 392.6 L502.8 392.7 L503.2 392.7 L503.8 392.7 L504.2 392.7 L504.8 392.7 L505.2 392.7 L505.8 392.7 L506.2 392.6 L506.8 392.5 L507.2 392.5 L507.8 392.4 L508.2 392.3 L508.8 392.2 L509.2 392.1 L509.8 392.1 L510.2 392.0 L510.8 392.0 L511.2 392.0 L511.8 392.0 L512.2 392.0 L512.8 392.1 L513.2 392.1 L513.8 392.2 L514.2 392.3 L514.8 392.4 L515.2 392.6 L515.8 392.7 L516.2 392.8 L516.8 392.9 L517.2 393.0 L517.8 393.1 L518.2 393.1 L518.8 393.2 L519.2 393.2 L519.8 393.3 L520.2 393.3 L520.8 393.4 L521.2 393.5 L521.8 393.6 L522.2 393.7 L522.8 393.9 L523.2 394.1 L523.8 394.3 L524.2 394.5 L524.8 394.7 L525.2 394.9 L525.8 395.2 L526.2 395.4 L526.8 395.6 L527.2 395.8 L527.8 396.0 L528.2 396.1 L528.8 396.3 L529.2 396.3 L529.8 396.4 L530.2 396.4 L530.8 396.4 L531.2 396.3 L531.8 396.2 L532.2 396.1 L532.8 395.8 L533.2 395.6 L533.8 395.2 L534.2 394.9 L534.8 394.5 L535.2 394.1 L535.8 393.7 L536.2 393.2 L536.8 392.8 L537.2 392.3 L537.8 391.9 L538.2 391.5 L538.8 391.1 L539.2 390.7 L539.8 390.4 L540.2 390.0 L540.8 389.8 L541.2 389.5 L541.8 389.3 L542.2 389.1 L542.8 389.0 L543.2 388.9 L543.8 388.8 L544.2 388.8 L544.8 388.8 L545.2 388.8 L545.8 388.8 L546.2 388.9 L546.8 389.0 L547.2 389.0 L547.8 389.1 L548.2 389.1 L548.8 389.2 L549.2 389.2 L549.8 389.2 L550.2 389.1 L550.8 388.9 L551.2 388.7 L551.8 388.5 L552.2 388.2 L552.8 388.0 L553.2 387.7 L553.8 387.4 L554.2 387.1 L554.8 386.8 L555.2 386.5 L555.8 386.3 L556.2 386.1 L556.8 386.0 L557.2 385.9 L557.8 385.9 L558.2 385.9 L558.8 386.0 L559.2 386.1 L559.8 386.3 L560.2 386.4 L560.8 386.6 L561.2 386.8 L561.8 386.9 L562.2 387.1 L562.8 387.2 L563.2 387.4 L563.8 387.5 L564.2 387.6 L564.8 387.7 L565.2 387.7 L565.8 387.7 L566.2 387.8 L566.8 387.8 L567.2 387.7 L567.8 387.7 L568.2 387.6 L568.8 387.6 L569.2 387.5 L569.8 387.3 L570.2 387.1 L570.8 386.9 L571.2 386.6 L571.8 386.3 L572.2 386.0 L572.8 385.7 L573.2 385.4 L573.8 385.1 L574.2 384.8 L574.8 384.5 L575.2 384.2 L575.8 383.9 L576.2 383.7 L576.8 383.5 L577.2 383.3 L577.8 383.2 L578.2 383.1 L578.8 383.1 L579.2 383.1 L579.8 383.2 L580.2 383.3 L580.8 383.4 L581.2 383.6 L581.8 383.8 L582.2 383.9 L582.8 384.1 L583.2 384.4 L583.8 384.6 L584.2 384.8 L584.8 385.0 L585.2 385.2 L585.8 385.3 L586.2 385.5 L586.8 385.6 L587.2 385.8 L587.8 385.9 L588.2 385.9 L588.8 386.0 L589.2 386.0 L589.8 386.1 L590.2 386.1 L590.8 386.1 L591.2 386.1 L591.8 386.0 L592.2 385.9 L592.8 385.7 L593.2 385.5 L593.8 385.2 L594.2 384.9 L594.8 384.5 L595.2 384.1 L595.8 383.7 L596.2 383.3 L596.8 382.8 L597.2 382.4 L597.8 381.9 L598.2 381.3 L598.8 380.8 L599.2 380.2 L599.8 379.6 L600.2 379.0 L600.8 378.3 L601.2 377.5 L601.8 376.8 L602.2 376.0 L602.8 375.2 L603.2 374.4 L603.8 373.6 L604.2 372.9 L604.8 372.3 L605.2 371.7 L605.8 371.2 L606.2 370.8 L606.8 370.5 L607.2 370.3 L607.8 370.1 L608.2 370.0 L608.8 369.9 L609.2 369.8 L609.8 369.7 L610.2 369.5 L610.8 369.2 L611.2 368.8 L611.8 368.3 L612.2 367.8 L612.8 367.2 L613.2 366.5 L613.8 365.9 L614.2 365.2 L614.8 364.5 L615.2 363.9 L615.8 363.3 L616.2 362.8 L616.8 362.4 L617.2 362.0 L617.8 361.6 L618.2 361.3 L618.8 361.0 L619.2 360.8 L619.8 360.6 L620.2 360.4 L620.8 360.1 L621.2 359.9 L621.8 359.7 L622.2 359.4 L622.8 359.2 L623.2 358.9 L623.8 358.7 L624.2 358.5 L624.8 358.3 L625.2 358.1 L625.8 357.9 L626.2 357.7 L626.8 357.5 L627.2 357.4 L627.8 357.2 L628.2 357.0 L628.8 356.8 L629.2 356.6 L629.8 356.4 L630.2 356.2 L630.8 356.1 L631.2 356.0 L631.8 355.9 L632.2 355.9 L632.8 355.9 L633.2 356.0 L633.8 356.1 L634.2 356.3 L634.8 356.6 L635.2 356.9 L635.8 357.2 L636.2 357.6 L636.8 358.1 L637.2 358.6 L637.8 359.0 L638.2 359.4 L638.8 359.8 L639.2 360.1 L639.8 360.4 L640.2 360.6 L640.8 360.8 L641.2 361.0 L641.8 361.2 L642.2 361.4 L642.8 361.7 L643.2 361.9 L643.8 362.1 L644.2 362.3 L644.8 362.5 L645.2 362.6 L645.8 362.7 L646.2 362.8 L646.8 362.7 L647.2 362.6 L647.8 362.4 L648.2 362.1 L648.8 361.7 L649.2 361.2 L649.8 360.7 L650.2 360.4 L650.8 360.0 L651.2 359.8 L651.8 359.5 L652.2 359.3 L652.8 359.0 L653.2 358.7 L653.8 358.5 L654.2 358.3 L654.8 358.2 L655.2 358.2 L655.8 358.0 L656.2 357.7 L656.8 357.4 L657.2 356.9 L657.8 356.5 L658.2 356.0 L658.8 355.4 L659.2 354.9 L659.8 354.4 L660.2 354.0 L660.8 353.8 L661.2 353.6 L661.8 353.5 L662.2 353.4 L662.8 353.3 L663.2 353.3 L663.8 353.4 L664.2 353.5 L664.8 353.6 L665.2 353.9 L665.8 354.1 L666.2 354.3 L666.8 354.4 L667.2 354.6 L667.8 354.6 L668.2 354.7 L668.8 354.6 L669.2 354.6 L669.8 354.4 L670.2 354.3 L670.8 354.0 L671.2 353.8 L671.8 353.4 L672.2 352.9 L672.8 352.4 L673.2 351.7 L673.8 351.0 L674.2 350.3 L674.8 349.5 L675.2 348.7 L675.8 347.9 L676.2 347.2 L676.8 346.4 L677.2 345.6 L677.8 344.8 L678.2 343.9 L678.8 342.9 L679.2 341.9 L679.8 340.8 L680.2 339.8 L680.8 338.8 L681.2 337.7 L681.8 336.9 L682.2 336.2 L682.8 335.7 L683.2 335.4 L683.8 335.2 L684.2 335.1 L684.8 335.3 L685.2 335.5 L685.8 335.9 L686.2 336.5 L686.8 337.2 L687.2 338.0 L687.8 338.6 L688.2 339.0 L688.8 339.2 L689.2 339.3 L689.8 339.2 L690.2 339.0 L690.8 338.7 L691.2 338.3 L691.8 338.0 L692.2 337.6 L692.8 337.2 L693.2 336.8 L693.8 336.6 L694.2 336.6 L694.8 336.7 L695.2 337.0 L695.8 337.4 L696.2 337.8 L696.8 338.3 L697.2 338.9 L697.8 339.5 L698.2 340.0 L698.8 340.4 L699.2 340.7 L699.8 341.0 L700.2 341.2 L700.8 341.3 L701.2 341.3 L701.8 341.3 L702.2 341.2 L702.8 341.1 L703.2 340.9 L703.8 340.7 L704.2 340.6 L704.8 340.5 L705.2 340.4 L705.8 340.3 L706.2 340.2 L706.8 340.1 L707.2 340.1 L707.8 340.1 L708.2 340.0 L708.8 340.0 L709.2 340.0 L709.8 340.0 L710.2 339.9 L710.8 339.9 L711.2 339.8 L711.8 339.7 L712.2 339.4 L712.8 339.1 L713.2 338.6 L713.8 338.0 L714.2 337.3 L714.8 336.4 L715.2 335.3 L715.8 334.2 L716.2 333.0 L716.8 331.9 L717.2 330.7 L717.8 329.5 L718.2 328.3 L718.8 327.0 L719.2 325.7 L719.8 324.4 L720.2 323.3 L720.8 322.2 L721.2 321.2 L721.8 320.4 L722.2 319.6 L722.8 319.0 L723.2 318.4 L723.8 317.9 L724.2 317.5 L724.8 317.2 L725.2 317.0 L725.8 316.9 L726.2 316.9 L726.8 317.0 L727.2 317.3 L727.8 317.6 L728.2 317.8 L728.8 318.0 L729.2 318.2 L729.8 318.4 L730.2 318.6 L730.8 318.7 L731.2 318.8 L731.8 318.8 L732.2 318.7 L732.8 318.4 L733.2 317.9 L733.8 317.4 L734.2 316.8 L734.8 316.1 L735.2 315.3 L735.8 314.6 L736.2 313.9 L736.8 313.3 L737.2 312.7 L737.8 312.3 L738.2 312.1 L738.8 312.0 L739.2 312.1 L739.8 312.4 L740.2 313.0 L740.8 313.8 L741.2 314.8 L741.8 316.1 L742.2 317.5 L742.8 319.1 L743.2 321.0 L743.8 322.7 L744.2 324.4 L744.8 325.9 L745.2 327.4 L745.8 328.7 L746.2 329.9 L746.8 330.9 L747.2 331.8 L747.8 332.8 L748.2 333.7 L748.8 334.6 L749.2 335.5 L749.8 336.3 L750.2 336.9 L750.8 337.4 L751.2 337.7 L751.8 337.9 L752.2 338.1 L752.8 338.3 L753.2 338.3 L753.8 338.3 L754.2 338.3 L754.8 338.2 L755.2 338.0 L755.8 337.7 L756.2 337.3 L756.8 336.7 L757.2 336.0 L757.8 335.4 L758.2 334.9 L758.8 334.5 L759.2 334.3 L759.8 334.0 L760.2 333.7 L760.8 333.5 L761.2 333.2 L761.8 332.9 L762.2 332.4 L762.8 331.8 L763.2 331.1 L763.8 330.3 L764.2 329.4 L764.8 328.3 L765.2 327.1 L765.8 325.9 L766.2 324.7 L766.8 323.5 L767.2 322.2 L767.8 321.0 L768.2 319.8 L768.8 318.7 L769.2 317.6 L769.8 316.7 L770.2 316.0 L770.8 315.5 L771.2 315.2 L771.8 314.9 L772.2 314.6 L772.8 314.4 L773.2 314.2 L773.8 314.0 L774.2 313.6 L774.8 313.3 L775.2 312.8 L775.8 312.3 L776.2 311.6 L776.8 310.8 L777.2 309.9 L777.8 309.0 L778.2 308.0 L778.8 307.0 L779.2 306.0 L779.8 304.9 L780.2 303.8 L780.8 302.6 L781.2 301.3 L781.8 299.8 L782.2 298.2 L782.8 296.3 L783.2 294.3 L783.8 291.9 L784.2 289.2 L784.8 286.3 L785.2 283.1 L785.8 279.7 L786.2 276.0 L786.8 272.1 L787.2 267.9 L787.8 263.9 L788.2 260.0 L788.8 256.2 L789.2 252.6 L789.8 249.4 L790.2 246.5 L790.8 244.0 L791.2 242.0 L791.8 240.1 L792.2 238.5 L792.8 237.1 L793.2 236.0 L793.8 234.8 L794.2 233.7 L794.8 232.6 L795.2 231.4 L795.8 230.5 L796.2 229.7 L796.8 229.0 L797.2 228.5 L797.8 227.9 L798.2 227.0 L798.8 225.9 L799.2 224.7 L799.8 223.9 L800.2 223.4 L800.8 223.4 L801.2 223.7 L801.8 224.1 L802.2 224.5 L802.8 225.0 L803.2 225.5 L803.8 226.1 L804.2 226.7 L804.8 227.5 L805.2 228.2 L805.8 229.1 L806.2 230.0 L806.8 231.1 L807.2 232.2 L807.8 233.0 L808.2 233.6 L808.8 233.9 L809.2 233.9 L809.8 233.7 L810.2 233.2 L810.8 232.4 L811.2 231.3 L811.8 230.0 L812.2 228.4 L812.8 226.6 L813.2 224.4 L813.8 222.1 L814.2 219.5 L814.8 216.8 L815.2 213.7 L815.8 210.8 L816.2 207.9 L816.8 205.1 L817.2 202.3 L817.8 199.7 L818.2 197.4 L818.8 195.3 L819.2 193.4 L819.8 191.8 L820.2 190.5 L820.8 189.6 L821.2 189.0 L821.8 188.4 L822.2 187.8 L822.8 187.2 L823.2 186.6 L823.8 186.0 L824.2 185.4 L824.8 184.6 L825.2 183.9 L825.8 183.0 L826.2 182.2 L826.8 181.2 L827.2 180.2 L827.8 179.4 L828.2 178.7 L828.8 178.2 L829.2 177.9 L829.8 177.7 L830.2 177.6 L830.8 177.7 L831.2 177.8 L831.8 178.2 L832.2 178.7 L832.8 179.4 L833.2 180.2 L833.8 180.8 L834.2 181.1 L834.8 181.0 L835.2 180.7 L835.8 180.4 L836.2 180.1 L836.8 179.8 L837.2 179.5 L837.8 179.3 L838.2 179.1 L838.8 179.1 L839.2 179.2 L839.8 179.3 L840.2 179.4 L840.8 179.6 L841.2 179.8 L841.8 179.8 L842.2 179.6 L842.8 179.2 L843.2 178.6 L843.8 177.7 L844.2 176.4 L844.8 174.7 L845.2 172.8 L845.8 170.5 L846.2 168.0 L846.8 165.1 L847.2 162.0 L847.8 159.2 L848.2 156.8 L848.8 154.7 L849.2 152.9 L849.8 151.5 L850.2 150.6 L850.8 150.1 L851.2 149.9 L851.8 150.0 L852.2 150.1 L852.8 150.5 L853.2 150.9 L853.8 151.5 L854.2 152.1 L854.8 152.9 L855.2 153.8 L855.8 154.6 L856.2 155.2 L856.8 155.7 L857.2 156.1 L857.6 156.4 L857.9 156.6 L858.0 156.7" fill="none" stroke="#000" stroke-width="0.6" stroke-linejoin="round"/><text x="160" y="392" class="an">배당락</text><path d="M175.0 397H178.0V403H180.5L176.5 409L172.5 403H175.0Z" fill="#0000e0"/><text x="188.5" y="414" class="lo">최저가 : 40,800 (2021/11/11)</text><path d="M189 412.8H146M151 409.5L146 412.8L152 416" stroke="#000" stroke-width="1.1" fill="none"/><text x="357.5" y="383.5" class="an">배당락</text><path d="M372.0 389H375.0V394.5H377.5L373.5 400.5L369.5 394.5H372.0Z" fill="#0000e0"/><text x="553" y="370.5" class="an">배당락</text><path d="M567.0 375H570.0V380.5H572.5L568.5 386.5L564.5 380.5H567.0Z" fill="#0000e0"/><text x="671" y="316" class="an">회사분할( 3.4%)</text><path d="M712.5 320H715.5V325.5H718L714 331.5L710 325.5H712.5Z" fill="#0000e0"/><text x="748" y="316" class="an">배당락</text><path d="M762.5 318H765.5V323.5H768L764 329.5L760 323.5H762.5Z" fill="#0000e0"/><text x="800" y="163.5" class="an">권리락( -1.53%)</text><path d="M837.5 169H840.5V172H843L839 178L835 172H837.5Z" fill="#0000e0"/><text x="661" y="148.5" class="hi">최고가 : 987,000 (2025/06/16)</text><path d="M811 141.5H850M845 137.5L850.5 141.5L845 145.5" stroke="#000" stroke-width="1.1" fill="none"/><rect x="877" y="123" width="53" height="100" fill="#fff"/><rect x="877" y="137" width="5" height="1" fill="#000"/><text x="884.5" y="141" class="al">100000</text><rect x="877" y="195" width="5" height="1" fill="#000"/><text x="884.5" y="199" class="al">80000</text><rect x="877" y="223" width="5" height="1" fill="#000"/><text x="884.5" y="227" class="al">70000</text><rect x="877" y="151" width="2" height="1" fill="#000"/><rect x="877" y="180" width="2" height="1" fill="#000"/><rect x="877" y="209" width="2" height="1" fill="#000"/><rect x="872" y="122" width="4" height="38" fill="#e01010"/><rect x="872" y="160" width="4" height="79" fill="#1010d0"/><rect x="876" y="122" width="1" height="312" fill="#000"/><rect x="879.5" y="153.5" width="60" height="12" fill="#fff" stroke="#000"/><text x="884" y="163.5" class="al" style="letter-spacing:0.2px">919,000</text><text x="891" y="178.5" class="al">0.00%</text></svg>
<div class="a" style="left:930px;top:122px;width:1px;height:330px;background:#a0a8b2;"></div>
<div class="a" style="left:2px;top:262px;width:8px;height:30px;border:1px solid #8c929a;background:linear-gradient(90deg,#f4f6f8,#d8dde4)"></div>
<svg class="a" style="left:4px;top:273px" width="6" height="9" viewBox="0 0 6 9"><path d="M1 1L4.5 4.5L1 8" stroke="#000" stroke-width="1.6" fill="none"/></svg>
</body></html>
